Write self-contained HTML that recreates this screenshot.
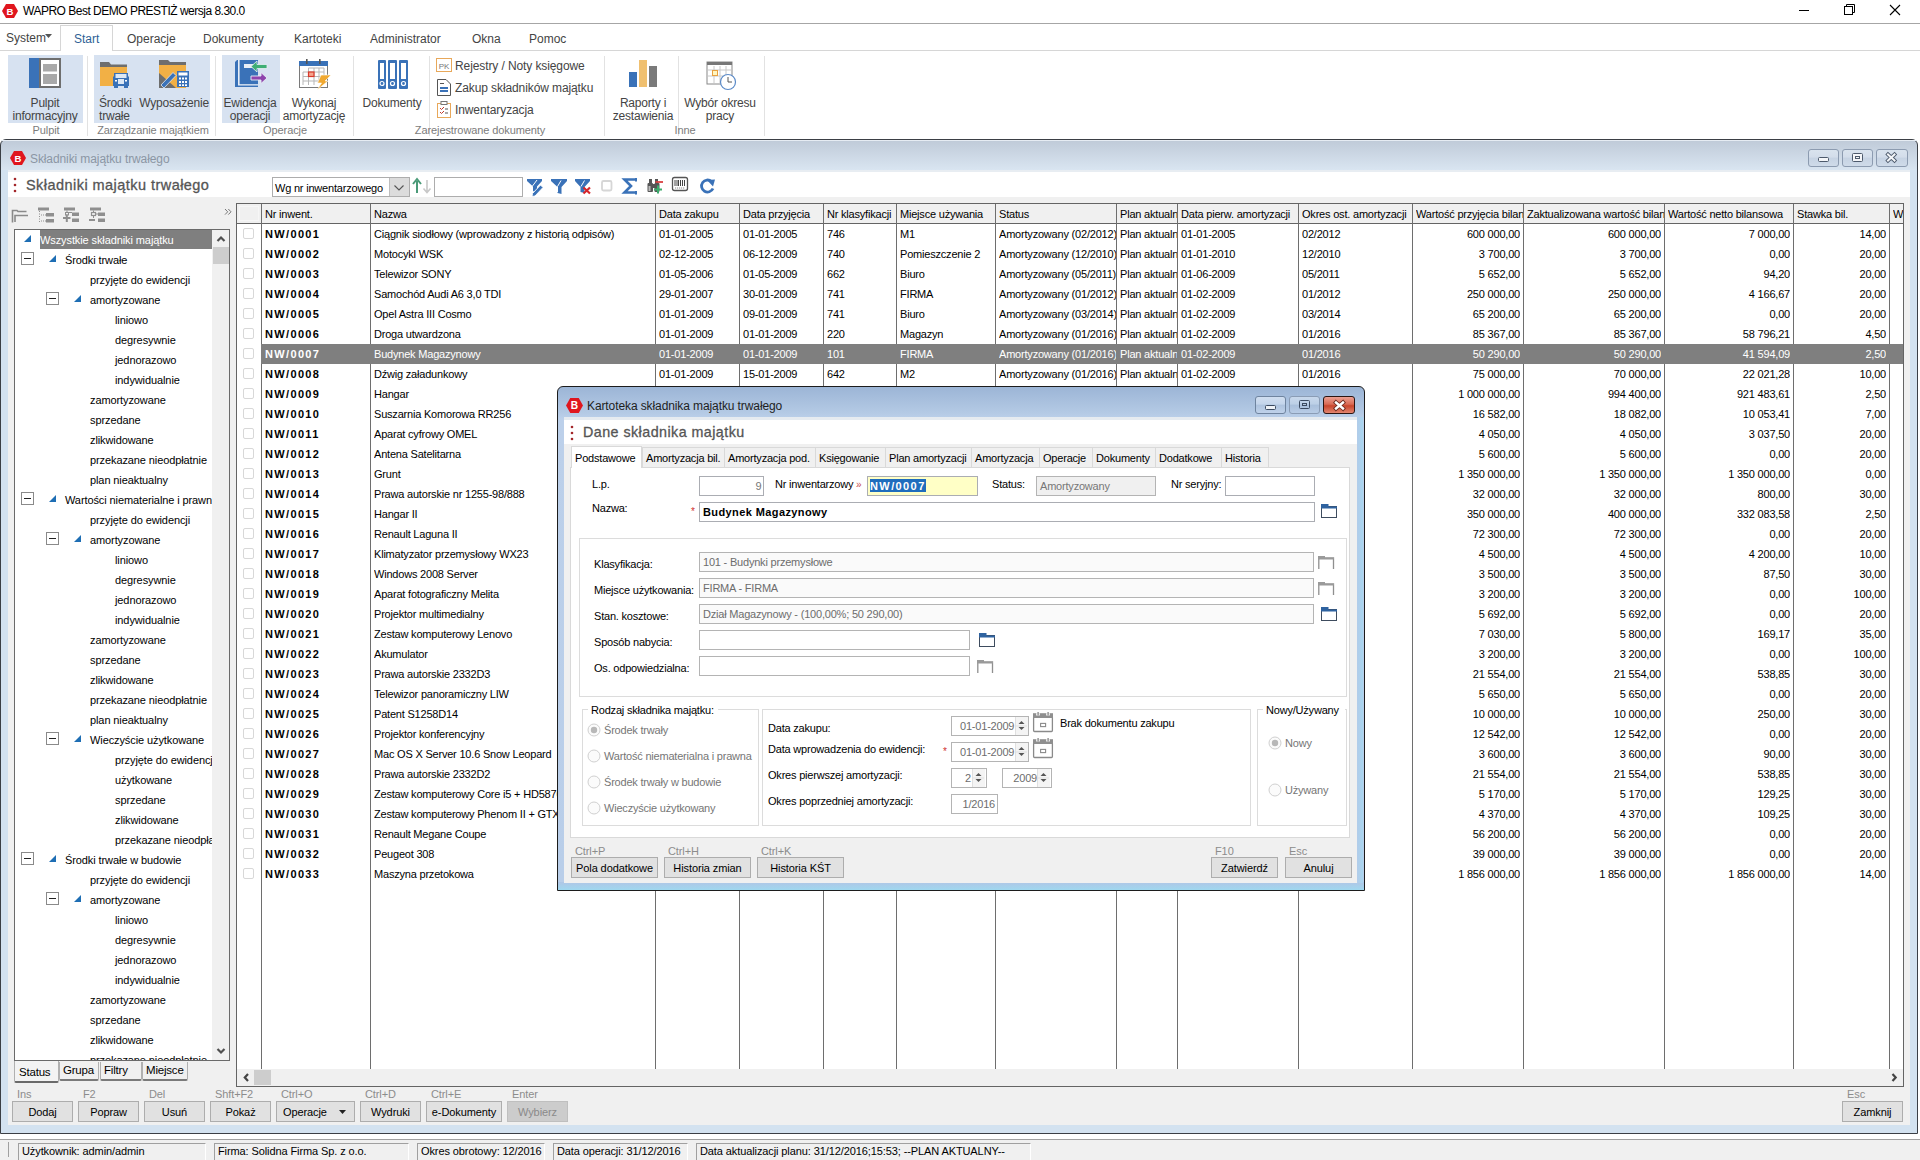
<!DOCTYPE html><html><head><meta charset="utf-8"><style>
html,body{margin:0;padding:0;}
body{width:1920px;height:1160px;overflow:hidden;position:relative;background:#ffffff;font-family:"Liberation Sans",sans-serif;}
div{position:absolute;box-sizing:border-box;}
.t{white-space:nowrap;}
</style></head><body>
<div style="left:0px;top:0px;width:1920px;height:23px;background:#fff"></div>
<svg style="position:absolute;left:2px;top:3px;" width="16" height="16" viewBox="0 0 16 16"><polygon points="4.0,0.96 12.0,0.96 16,8.0 12.0,15.04 4.0,15.04 0,8.0" fill="#e0161e"/><text x="8.0" y="11.52" font-family="Liberation Sans" font-weight="700" font-size="9.6" fill="#fff" text-anchor="middle">B</text></svg>
<div class="t" style="left:23px;top:3.3000000000000007px;font-size:12px;line-height:17px;color:#000;font-weight:400;letter-spacing:-0.5px">WAPRO Best DEMO PRESTIŻ wersja 8.30.0</div>
<svg style="position:absolute;left:1795px;top:0px;" width="125" height="23" viewBox="0 0 125 23"><line x1="4" y1="10.5" x2="14" y2="10.5" stroke="#000" stroke-width="1"/><rect x="49.5" y="6.5" width="8" height="8" fill="none" stroke="#000"/><path d="M51.5 6.5 V4.5 H59.5 V12.5 H57.5" fill="none" stroke="#000"/><path d="M95 5 L105 15 M105 5 L95 15" stroke="#000" stroke-width="1.1"/></svg>
<div style="left:0px;top:23px;width:1920px;height:1px;background:#a6a6a6"></div>
<div style="left:0px;top:24px;width:1920px;height:27px;background:#fff"></div>
<div style="left:0px;top:50px;width:1920px;height:1px;background:#d6d6d6"></div>
<div style="left:60px;top:25px;width:53px;height:26px;background:#fff;border:1px solid #d6d6d6;border-bottom:none"></div>
<div class="t" style="left:6px;top:29.5px;font-size:12px;line-height:17px;color:#444;font-weight:400;">System</div>
<svg style="position:absolute;left:45px;top:34px;" width="8" height="5" viewBox="0 0 8 5"><polygon points="0,0 7,0 3.5,4" fill="#555"/></svg>
<div class="t" style="left:74px;top:31.0px;font-size:12px;line-height:17px;color:#2f5f95;font-weight:400;">Start</div>
<div class="t" style="left:127px;top:31.0px;font-size:12px;line-height:17px;color:#444;font-weight:400;">Operacje</div>
<div class="t" style="left:203px;top:31.0px;font-size:12px;line-height:17px;color:#444;font-weight:400;">Dokumenty</div>
<div class="t" style="left:294px;top:31.0px;font-size:12px;line-height:17px;color:#444;font-weight:400;">Kartoteki</div>
<div class="t" style="left:370px;top:31.0px;font-size:12px;line-height:17px;color:#444;font-weight:400;">Administrator</div>
<div class="t" style="left:472px;top:31.0px;font-size:12px;line-height:17px;color:#444;font-weight:400;">Okna</div>
<div class="t" style="left:529px;top:31.0px;font-size:12px;line-height:17px;color:#444;font-weight:400;">Pomoc</div>
<div style="left:0px;top:51px;width:1920px;height:87px;background:#fff"></div>
<div style="left:8px;top:55px;width:75px;height:68px;background:#d7e2f1"></div>
<div style="left:94px;top:55px;width:116px;height:68px;background:#d7e2f1"></div>
<div style="left:222px;top:55px;width:58px;height:68px;background:#d7e2f1"></div>
<div style="left:87px;top:56px;width:1px;height:80px;background:#e2e2e2"></div>
<div style="left:215px;top:56px;width:1px;height:80px;background:#e2e2e2"></div>
<div style="left:353px;top:56px;width:1px;height:80px;background:#e2e2e2"></div>
<div style="left:429px;top:56px;width:1px;height:80px;background:#e2e2e2"></div>
<div style="left:604px;top:56px;width:1px;height:80px;background:#e2e2e2"></div>
<div style="left:678px;top:56px;width:1px;height:80px;background:#e2e2e2"></div>
<div style="left:764px;top:56px;width:1px;height:80px;background:#e2e2e2"></div>
<div class="t" style="left:-54.0px;width:200px;text-align:center;top:121.5px;font-size:11px;line-height:16px;color:#7c7c7c;font-weight:400;letter-spacing:-0.1px">Pulpit</div>
<div class="t" style="left:53.0px;width:200px;text-align:center;top:121.5px;font-size:11px;line-height:16px;color:#7c7c7c;font-weight:400;letter-spacing:-0.1px">Zarządzanie majątkiem</div>
<div class="t" style="left:185.0px;width:200px;text-align:center;top:121.5px;font-size:11px;line-height:16px;color:#7c7c7c;font-weight:400;letter-spacing:-0.1px">Operacje</div>
<div class="t" style="left:380.0px;width:200px;text-align:center;top:121.5px;font-size:11px;line-height:16px;color:#7c7c7c;font-weight:400;letter-spacing:-0.1px">Zarejestrowane dokumenty</div>
<div class="t" style="left:585.0px;width:200px;text-align:center;top:121.5px;font-size:11px;line-height:16px;color:#7c7c7c;font-weight:400;letter-spacing:-0.1px">Inne</div>
<div class="t" style="left:-55.0px;width:200px;text-align:center;top:94.5px;font-size:12px;line-height:17px;color:#444;font-weight:400;letter-spacing:-0.2px">Pulpit</div>
<div class="t" style="left:-55.0px;width:200px;text-align:center;top:107.5px;font-size:12px;line-height:17px;color:#444;font-weight:400;letter-spacing:-0.2px">informacyjny</div>
<div class="t" style="left:74.0px;width:200px;text-align:center;top:94.5px;font-size:12px;line-height:17px;color:#444;font-weight:400;letter-spacing:-0.2px">Wyposażenie</div>
<div class="t" style="left:150.0px;width:200px;text-align:center;top:94.5px;font-size:12px;line-height:17px;color:#444;font-weight:400;letter-spacing:-0.2px">Ewidencja</div>
<div class="t" style="left:150.0px;width:200px;text-align:center;top:107.5px;font-size:12px;line-height:17px;color:#444;font-weight:400;letter-spacing:-0.2px">operacji</div>
<div class="t" style="left:214.0px;width:200px;text-align:center;top:94.5px;font-size:12px;line-height:17px;color:#444;font-weight:400;letter-spacing:-0.2px">Wykonaj</div>
<div class="t" style="left:214.0px;width:200px;text-align:center;top:107.5px;font-size:12px;line-height:17px;color:#444;font-weight:400;letter-spacing:-0.2px">amortyzację</div>
<div class="t" style="left:292.0px;width:200px;text-align:center;top:94.5px;font-size:12px;line-height:17px;color:#444;font-weight:400;letter-spacing:-0.2px">Dokumenty</div>
<div class="t" style="left:543.0px;width:200px;text-align:center;top:94.5px;font-size:12px;line-height:17px;color:#444;font-weight:400;letter-spacing:-0.2px">Raporty i</div>
<div class="t" style="left:543.0px;width:200px;text-align:center;top:107.5px;font-size:12px;line-height:17px;color:#444;font-weight:400;letter-spacing:-0.2px">zestawienia</div>
<div class="t" style="left:620.0px;width:200px;text-align:center;top:94.5px;font-size:12px;line-height:17px;color:#444;font-weight:400;letter-spacing:-0.2px">Wybór okresu</div>
<div class="t" style="left:620.0px;width:200px;text-align:center;top:107.5px;font-size:12px;line-height:17px;color:#444;font-weight:400;letter-spacing:-0.2px">pracy</div>
<div class="t" style="left:99px;top:94.5px;font-size:12px;line-height:17px;color:#444;font-weight:400;letter-spacing:-0.2px">Środki</div>
<div class="t" style="left:99px;top:107.5px;font-size:12px;line-height:17px;color:#444;font-weight:400;letter-spacing:-0.2px">trwałe</div>
<div class="t" style="left:455px;top:58.0px;font-size:12px;line-height:17px;color:#444;font-weight:400;letter-spacing:-0.1px">Rejestry / Noty księgowe</div>
<div class="t" style="left:455px;top:80.0px;font-size:12px;line-height:17px;color:#444;font-weight:400;letter-spacing:-0.1px">Zakup składników majątku</div>
<div class="t" style="left:455px;top:102.0px;font-size:12px;line-height:17px;color:#444;font-weight:400;letter-spacing:-0.1px">Inwentaryzacja</div>
<svg style="position:absolute;left:29px;top:58px;" width="33" height="31" viewBox="0 0 33 31"><rect x="0" y="0" width="11" height="30" fill="#3a72b8"/><rect x="11" y="1" width="20" height="28" fill="#fff" stroke="#6e6e6e" stroke-width="2"/><rect x="14" y="6" width="14" height="7.5" fill="#a9a9a9"/><rect x="14" y="16" width="14" height="10" fill="#a9a9a9"/></svg>
<svg style="position:absolute;left:99px;top:60px;" width="32" height="30" viewBox="0 0 32 30"><path d="M1 2 H10 L12 4.5 H28 V7 H1 Z" fill="#6e6e6e"/><rect x="1" y="7" width="27" height="19" fill="#f2b045"/><path d="M15 13 H29 V16 L30 17 V26 H14 V17 L15 16 Z" fill="#3a72b8"/><rect x="16.5" y="14" width="11" height="4" fill="#dde8f5"/><rect x="19" y="19" width="6" height="5" fill="#dde8f5"/><rect x="15" y="25" width="4" height="3" fill="#3a72b8"/><rect x="25" y="25" width="4" height="3" fill="#3a72b8"/><rect x="16" y="20" width="2" height="1.5" fill="#fff"/><rect x="26" y="20" width="2" height="1.5" fill="#fff"/></svg>
<svg style="position:absolute;left:158px;top:59px;" width="33" height="31" viewBox="0 0 33 31"><path d="M1 1 H10 L12 3 H28 V6 H1 Z" fill="#6e6e6e"/><rect x="1" y="6" width="27" height="23" fill="#f2b045"/><path d="M1 14 L18 29 H1 Z" fill="#6e6e6e"/><path d="M3 26 L15 13.5 L18 16.5 L6 29 Z" fill="#3a72b8" stroke="#dfe8f3" stroke-width="0.8"/><rect x="19" y="12" width="12" height="16" fill="#3a72b8"/><rect x="20.5" y="13.5" width="9" height="3" fill="#fff"/><g fill="#fff"><rect x="21" y="18.5" width="2" height="2"/><rect x="24" y="18.5" width="2" height="2"/><rect x="27" y="18.5" width="2" height="2"/><rect x="21" y="22" width="2" height="2"/><rect x="24" y="22" width="2" height="2"/><rect x="27" y="22" width="2" height="2"/><rect x="21" y="25.3" width="2" height="1.7"/><rect x="24" y="25.3" width="2" height="1.7"/><rect x="27" y="25.3" width="2" height="1.7"/></g></svg>
<svg style="position:absolute;left:234px;top:59px;" width="34" height="30" viewBox="0 0 34 30"><path d="M3 1 H24 V28 H1 V3 Z" fill="#3a72b8"/><rect x="4" y="1" width="1.6" height="25" fill="#e8eef6"/><rect x="4" y="25.2" width="20" height="1.3" fill="#e8eef6"/><rect x="10" y="5" width="10" height="4" fill="#e8eef6"/><polygon points="17,7.5 23,2 23,5.5 33,5.5 33,9.5 23,9.5 23,13" fill="#3fae75" stroke="#e8eef6" stroke-width="0.8"/><polygon points="33,19 27,13.5 27,17 17,17 17,21 27,21 27,24.5" fill="#8e44ad" stroke="#e8eef6" stroke-width="0.9"/></svg>
<svg style="position:absolute;left:298px;top:58px;" width="34" height="32" viewBox="0 0 34 32"><rect x="1.5" y="3.5" width="28" height="26" fill="#fff" stroke="#7a7a7a" stroke-width="1"/><rect x="1" y="3" width="29" height="5" fill="#3a72b8"/><rect x="8" y="1" width="1.6" height="5" fill="#555"/><rect x="21" y="1" width="1.6" height="5" fill="#555"/><g stroke="#b7b7b7" stroke-width="1"><line x1="5" y1="14" x2="26" y2="14"/><line x1="5" y1="18.5" x2="26" y2="18.5"/><line x1="5" y1="23" x2="26" y2="23"/><line x1="5" y1="14" x2="5" y2="27"/><line x1="10.5" y1="10" x2="10.5" y2="27"/><line x1="16" y1="10" x2="16" y2="27"/><line x1="21" y1="10" x2="21" y2="25"/><line x1="10.5" y1="10" x2="26" y2="10"/><line x1="26" y1="10" x2="26" y2="20"/></g><rect x="10.5" y="14" width="5.5" height="4.5" fill="#f5a58e" stroke="#d8392b" stroke-width="1.2"/><path d="M23 17 H33 L27 23 H30 L19 32 L23.5 25 H19.5 Z" fill="#f0a830" stroke="#fff" stroke-width="0.6"/></svg>
<svg style="position:absolute;left:378px;top:60px;" width="30" height="29" viewBox="0 0 30 29"><g fill="#3a72b8"><rect x="0" y="0" width="8" height="29" rx="1"/><rect x="10" y="0" width="9" height="29" rx="1"/><rect x="21" y="0" width="9" height="29" rx="1"/></g><g fill="#fff"><rect x="2" y="3" width="4" height="16"/><rect x="12" y="3" width="5" height="16"/><rect x="23" y="3" width="5" height="16"/></g><g fill="none" stroke="#fff" stroke-width="1.2"><circle cx="4" cy="23.5" r="2"/><circle cx="14.5" cy="23.5" r="2"/><circle cx="25.5" cy="23.5" r="2"/></g></svg>
<svg style="position:absolute;left:436px;top:57px;" width="16" height="16" viewBox="0 0 16 16"><rect x="0.5" y="1.5" width="15" height="13" fill="#fff" stroke="#e8a85a" stroke-width="1"/><text x="8" y="12" font-family="Liberation Sans" font-size="8" fill="#777" text-anchor="middle">PK</text></svg>
<svg style="position:absolute;left:437px;top:79px;" width="14" height="17" viewBox="0 0 14 17"><path d="M0.5 0.5 H9 L13.5 5 V16.5 H0.5 Z" fill="#fff" stroke="#555"/><g fill="#3a72b8"><rect x="3" y="8" width="8" height="2"/><rect x="3" y="11" width="8" height="2"/></g><rect x="3" y="4" width="4" height="1" fill="#555"/></svg>
<svg style="position:absolute;left:437px;top:101px;" width="14" height="17" viewBox="0 0 14 17"><rect x="0.5" y="2.5" width="13" height="14" fill="#fff" stroke="#e8a85a"/><rect x="4" y="0.5" width="6" height="3" fill="#fff" stroke="#777"/><path d="M3 7 L4.5 8.5 L7 6 M3 11 L4.5 12.5 L7 10" stroke="#c0392b" fill="none"/><path d="M8 8 H11 M8 12 H11" stroke="#555"/></svg>
<svg style="position:absolute;left:629px;top:60px;" width="29" height="28" viewBox="0 0 29 28"><rect x="0" y="12" width="8" height="15" fill="#3a72b8"/><rect x="10" y="0" width="8" height="27" fill="#f0c070"/><rect x="20" y="6" width="8" height="21" fill="#7a7a7a"/></svg>
<svg style="position:absolute;left:706px;top:61px;" width="31" height="31" viewBox="0 0 31 31"><rect x="1" y="1" width="25" height="22" fill="#fff" stroke="#888"/><rect x="1" y="1" width="25" height="3" fill="#777"/><g stroke="#c8c8c8"><line x1="2" y1="9" x2="25" y2="9"/><line x1="2" y1="15" x2="25" y2="15"/><line x1="8" y1="5" x2="8" y2="22"/><line x1="14" y1="5" x2="14" y2="22"/><line x1="20" y1="5" x2="20" y2="22"/></g><rect x="6.5" y="9.5" width="5" height="5" fill="#fff6c0" stroke="#e8a040"/><circle cx="22" cy="21" r="7.5" fill="#fff" stroke="#5a8ac8" stroke-width="1.2"/><path d="M22 16 V21 H26" stroke="#555" fill="none"/></svg>
<div style="left:0px;top:139px;width:1918px;height:995px;background:linear-gradient(#bfcad8 0px,#d9e5f1 30px,#dae6f2 100%);border:1px solid #3b3f45;border-radius:6px 6px 0 0"></div>
<div style="left:1px;top:140px;width:1916px;height:1px;background:#e6ecf3"></div>
<div style="left:8px;top:170px;width:1902px;height:955px;background:#f0f0f0"></div>
<div style="left:8px;top:170px;width:1902px;height:2px;background:#e8edf2"></div>
<svg style="position:absolute;left:10px;top:150px;" width="16" height="16" viewBox="0 0 16 16"><polygon points="4.0,0.96 12.0,0.96 16,8.0 12.0,15.04 4.0,15.04 0,8.0" fill="#e0161e"/><text x="8.0" y="11.52" font-family="Liberation Sans" font-weight="700" font-size="9.6" fill="#fff" text-anchor="middle">B</text></svg>
<div class="t" style="left:30px;top:151.0px;font-size:12px;line-height:17px;color:#8b96a4;font-weight:400;letter-spacing:-0.1px">Składniki majątku trwałego</div>
<div style="left:1808px;top:149px;width:31px;height:18px;background:linear-gradient(#d9e3ee 0%,#d3ddea 45%,#c6d3e3 50%,#cfdbe9 100%);border:1px solid #8c9bb0;border-radius:3px"></div>
<div style="left:1842px;top:149px;width:31px;height:18px;background:linear-gradient(#d9e3ee 0%,#d3ddea 45%,#c6d3e3 50%,#cfdbe9 100%);border:1px solid #8c9bb0;border-radius:3px"></div>
<div style="left:1876px;top:149px;width:32px;height:18px;background:linear-gradient(#d9e3ee 0%,#d3ddea 45%,#c6d3e3 50%,#cfdbe9 100%);border:1px solid #8c9bb0;border-radius:3px"></div>
<svg style="position:absolute;left:1808px;top:149px;" width="100" height="18" viewBox="0 0 100 18"><rect x="10.5" y="8.5" width="10" height="4" rx="1" fill="#f4f6f9" stroke="#4d5a6c"/><rect x="44.5" y="4.5" width="10" height="8" rx="1" fill="#f4f6f9" stroke="#4d5a6c"/><rect x="47.5" y="7.5" width="4" height="2" fill="none" stroke="#4d5a6c"/><path d="M80 5.5 L86.5 11.5 M86.5 5.5 L80 11.5" stroke="#4d5a6c" stroke-width="3.8" stroke-linecap="square"/><path d="M80 5.5 L86.5 11.5 M86.5 5.5 L80 11.5" stroke="#f4f6f9" stroke-width="2" stroke-linecap="square"/></svg>
<div style="left:8px;top:172px;width:1902px;height:25px;background:#fff"></div>
<svg style="position:absolute;left:13px;top:177px;" width="4" height="16" viewBox="0 0 4 16"><circle cx="2" cy="2" r="1.3" fill="#a3262a"/><circle cx="2" cy="8" r="1.3" fill="#a3262a"/><circle cx="2" cy="14" r="1.3" fill="#a3262a"/></svg>
<div class="t" style="left:26px;top:176.25px;font-size:14.5px;line-height:19.5px;color:#555;font-weight:400;-webkit-text-stroke:0.3px #555;letter-spacing:0.45px">Składniki majątku trwałego</div>
<div style="left:272px;top:177px;width:138px;height:20px;background:#fff;border:1px solid #adadad"></div>
<div class="t" style="left:275px;top:179.5px;font-size:11px;line-height:16px;color:#000;font-weight:400;letter-spacing:-0.2px">Wg nr inwentarzowego</div>
<div style="left:389px;top:178px;width:20px;height:18px;background:#dcdcdc;border-left:1px solid #bdbdbd"></div>
<svg style="position:absolute;left:393px;top:184px;" width="12" height="8" viewBox="0 0 12 8"><path d="M1.5 1.5 L6 6 L10.5 1.5" fill="none" stroke="#555" stroke-width="1.1"/></svg>
<svg style="position:absolute;left:412px;top:177px;" width="20" height="18" viewBox="0 0 20 18"><path d="M5 16 V4 M1 7 L5 2 L9 7" fill="none" stroke="#4a9a78" stroke-width="2"/><path d="M15 3 V15 M11.5 11.5 L15 15.5 L18.5 11.5" fill="none" stroke="#c8c8c8" stroke-width="1.6"/></svg>
<div style="left:434px;top:177px;width:89px;height:20px;background:#fff;border:1px solid #adadad"></div>
<svg style="position:absolute;left:520px;top:172px;" width="200" height="28" viewBox="0 0 200 28"><path d="M7 7 H22 V9 L17 14.5 V21 L13 19 V14.5 L7 9 Z" fill="#3a72b8"/><path d="M17 8 L12.5 14" stroke="#fff" stroke-width="1"/><path d="M12.5 21.5 L20.5 13 L23 15.5 L15 24 L12 24.5 Z" fill="#3a72b8" stroke="#fff" stroke-width="0.9"/><path d="M31 7 H47 V9 L41.5 15 V22 L37.5 21 V15 L31 9 Z" fill="#3a72b8"/><path d="M41 8.5 L37.5 14.5 V20" stroke="#fff" stroke-width="1" fill="none"/><path d="M55 7 H70 V9 L64.5 15 V21 L60.5 20 V15 L55 9 Z" fill="#3a72b8"/><path d="M64.5 8.5 L61 14.5" stroke="#fff" stroke-width="1"/><path d="M63.5 15.5 L70 21.5 M70 15.5 L63.5 21.5" stroke="#d7262b" stroke-width="2.2"/><rect x="82" y="9" width="9.5" height="9.5" rx="1.5" fill="#fff" stroke="#d6d6d6" stroke-width="1.8"/><path d="M117 7.5 H104.5 L111 14 L104.5 20.5 H117" fill="none" stroke="#3a72b8" stroke-width="2.6" stroke-linejoin="miter"/><path d="M116 6 V9.5 M116 19 V22.5" stroke="#3a72b8" stroke-width="2"/><g fill="#555"><rect x="127.5" y="11" width="5.5" height="9" rx="1"/><rect x="134.5" y="11" width="5" height="9" rx="1"/><rect x="129" y="7" width="3" height="5"/><rect x="135" y="7" width="3" height="5"/><rect x="131" y="12" width="5" height="4"/></g><rect x="128.5" y="14" width="2" height="5" fill="#bbb"/><path d="M135.5 10 H143" stroke="#d94040" stroke-width="1.8"/><path d="M134 17.5 H142 M138 13.5 V21.5" stroke="#3bab6b" stroke-width="2"/><rect x="152.5" y="5.5" width="15" height="13" rx="2" fill="#fff" stroke="#555" stroke-width="1.3"/><g stroke="#444" stroke-width="1"><line x1="155" y1="8" x2="155" y2="14"/><line x1="157" y1="8" x2="157" y2="14"/><line x1="158.5" y1="8" x2="158.5" y2="14"/><line x1="160.5" y1="8" x2="160.5" y2="14"/><line x1="162.5" y1="8" x2="162.5" y2="14"/><line x1="164.5" y1="8" x2="164.5" y2="14"/></g><path d="M155 16 H165" stroke="#888" stroke-width="1" stroke-dasharray="1.2,0.8"/><path d="M191.5 9.5 A6 6 0 1 0 193 16.5" fill="none" stroke="#3a72b8" stroke-width="2.8"/><path d="M187 8 L195 7.5 L193 14.5 Z" fill="#3a72b8"/></svg>
<svg style="position:absolute;left:5px;top:198px;" width="110" height="30" viewBox="0 0 110 30"><path d="M7.5 24.5 V12.5 H12 L13 13.5 H21.5" fill="none" stroke="#8a8a8a" stroke-width="1.6"/><path d="M10 24 V17.5 H23" fill="none" stroke="#8a8a8a" stroke-width="1.6"/><g fill="#8f8f8f"><rect x="33" y="9.5" width="11" height="3"/><rect x="41" y="15" width="8" height="3.5"/><rect x="41" y="21" width="8" height="3.5"/></g><path d="M34.5 13 V24" stroke="#8f8f8f" stroke-width="1" stroke-dasharray="1,1.5"/><path d="M36 17 H41 M36 23 H41" stroke="#8f8f8f" stroke-dasharray="1,1"/><g fill="#8f8f8f"><rect x="59" y="9.5" width="11" height="3"/><rect x="67" y="14.5" width="7" height="3.5"/><rect x="67" y="20.5" width="7" height="3.5"/><rect x="58" y="19" width="7.5" height="2"/><rect x="60.8" y="16.5" width="2" height="7.5"/></g><path d="M62 12.5 V15 M62.5 14.5 H67" stroke="#8f8f8f"/><rect x="60.5" y="14.5" width="3" height="2.5" fill="none" stroke="#8f8f8f"/><g fill="#8f8f8f"><rect x="85" y="9.5" width="11" height="3"/><rect x="93" y="14.5" width="7" height="3.5"/><rect x="93" y="20.5" width="7" height="3.5"/><rect x="84" y="21" width="6" height="2"/></g><rect x="86.5" y="14.5" width="4" height="3" fill="none" stroke="#8f8f8f" stroke-width="1.2"/><path d="M88.5 12.5 V14.5 M88.5 17.5 V20 M90.5 16 H93" stroke="#8f8f8f"/></svg>
<svg style="position:absolute;left:224px;top:208px;" width="9" height="8" viewBox="0 0 9 8"><path d="M1 1 L3.7 3.8 L1 6.6 M4.3 1 L7 3.8 L4.3 6.6" fill="none" stroke="#777" stroke-width="1"/></svg>
<div style="left:14px;top:229px;width:216px;height:832px;background:#fff;border:1px solid #6a6a6a"></div>
<div style="left:15px;top:230px;width:197px;height:830px;overflow:hidden">
<div style="left:25px;top:-1px;width:172px;height:20px;background:#7f7f7f"></div>
<div class="t" style="left:25px;top:1.7999999999999998px;font-size:11px;line-height:16px;color:#fff;letter-spacing:-0.1px">Wszystkie składniki majątku</div>
<svg style="position:absolute;left:8px;top:4px" width="10" height="10"><polygon points="8,1 8,8 1,8" fill="#1e6eb4"/></svg>
<div class="t" style="left:50px;top:21.8px;font-size:11px;line-height:16px;color:#000;letter-spacing:-0.1px">Środki trwałe</div>
<svg style="position:absolute;left:33px;top:24px" width="10" height="10"><polygon points="8,1 8,8 1,8" fill="#1e6eb4"/></svg>
<div style="left:6px;top:22px;width:13px;height:13px;border:1px solid #8a8a8a;background:#fff"></div><div style="left:9px;top:28px;width:7px;height:1px;background:#222"></div>
<div class="t" style="left:75px;top:41.8px;font-size:11px;line-height:16px;color:#000;letter-spacing:-0.1px">przyjęte do ewidencji</div>
<div class="t" style="left:75px;top:61.8px;font-size:11px;line-height:16px;color:#000;letter-spacing:-0.1px">amortyzowane</div>
<svg style="position:absolute;left:58px;top:64px" width="10" height="10"><polygon points="8,1 8,8 1,8" fill="#1e6eb4"/></svg>
<div style="left:31px;top:62px;width:13px;height:13px;border:1px solid #8a8a8a;background:#fff"></div><div style="left:34px;top:68px;width:7px;height:1px;background:#222"></div>
<div class="t" style="left:100px;top:81.8px;font-size:11px;line-height:16px;color:#000;letter-spacing:-0.1px">liniowo</div>
<div class="t" style="left:100px;top:101.8px;font-size:11px;line-height:16px;color:#000;letter-spacing:-0.1px">degresywnie</div>
<div class="t" style="left:100px;top:121.8px;font-size:11px;line-height:16px;color:#000;letter-spacing:-0.1px">jednorazowo</div>
<div class="t" style="left:100px;top:141.8px;font-size:11px;line-height:16px;color:#000;letter-spacing:-0.1px">indywidualnie</div>
<div class="t" style="left:75px;top:161.8px;font-size:11px;line-height:16px;color:#000;letter-spacing:-0.1px">zamortyzowane</div>
<div class="t" style="left:75px;top:181.8px;font-size:11px;line-height:16px;color:#000;letter-spacing:-0.1px">sprzedane</div>
<div class="t" style="left:75px;top:201.8px;font-size:11px;line-height:16px;color:#000;letter-spacing:-0.1px">zlikwidowane</div>
<div class="t" style="left:75px;top:221.8px;font-size:11px;line-height:16px;color:#000;letter-spacing:-0.1px">przekazane nieodpłatnie</div>
<div class="t" style="left:75px;top:241.8px;font-size:11px;line-height:16px;color:#000;letter-spacing:-0.1px">plan nieaktualny</div>
<div class="t" style="left:50px;top:261.8px;font-size:11px;line-height:16px;color:#000;letter-spacing:-0.1px">Wartości niematerialne i prawne</div>
<svg style="position:absolute;left:33px;top:264px" width="10" height="10"><polygon points="8,1 8,8 1,8" fill="#1e6eb4"/></svg>
<div style="left:6px;top:262px;width:13px;height:13px;border:1px solid #8a8a8a;background:#fff"></div><div style="left:9px;top:268px;width:7px;height:1px;background:#222"></div>
<div class="t" style="left:75px;top:281.8px;font-size:11px;line-height:16px;color:#000;letter-spacing:-0.1px">przyjęte do ewidencji</div>
<div class="t" style="left:75px;top:301.8px;font-size:11px;line-height:16px;color:#000;letter-spacing:-0.1px">amortyzowane</div>
<svg style="position:absolute;left:58px;top:304px" width="10" height="10"><polygon points="8,1 8,8 1,8" fill="#1e6eb4"/></svg>
<div style="left:31px;top:302px;width:13px;height:13px;border:1px solid #8a8a8a;background:#fff"></div><div style="left:34px;top:308px;width:7px;height:1px;background:#222"></div>
<div class="t" style="left:100px;top:321.8px;font-size:11px;line-height:16px;color:#000;letter-spacing:-0.1px">liniowo</div>
<div class="t" style="left:100px;top:341.8px;font-size:11px;line-height:16px;color:#000;letter-spacing:-0.1px">degresywnie</div>
<div class="t" style="left:100px;top:361.8px;font-size:11px;line-height:16px;color:#000;letter-spacing:-0.1px">jednorazowo</div>
<div class="t" style="left:100px;top:381.8px;font-size:11px;line-height:16px;color:#000;letter-spacing:-0.1px">indywidualnie</div>
<div class="t" style="left:75px;top:401.8px;font-size:11px;line-height:16px;color:#000;letter-spacing:-0.1px">zamortyzowane</div>
<div class="t" style="left:75px;top:421.8px;font-size:11px;line-height:16px;color:#000;letter-spacing:-0.1px">sprzedane</div>
<div class="t" style="left:75px;top:441.8px;font-size:11px;line-height:16px;color:#000;letter-spacing:-0.1px">zlikwidowane</div>
<div class="t" style="left:75px;top:461.8px;font-size:11px;line-height:16px;color:#000;letter-spacing:-0.1px">przekazane nieodpłatnie</div>
<div class="t" style="left:75px;top:481.8px;font-size:11px;line-height:16px;color:#000;letter-spacing:-0.1px">plan nieaktualny</div>
<div class="t" style="left:75px;top:501.8px;font-size:11px;line-height:16px;color:#000;letter-spacing:-0.1px">Wieczyście użytkowane</div>
<svg style="position:absolute;left:58px;top:504px" width="10" height="10"><polygon points="8,1 8,8 1,8" fill="#1e6eb4"/></svg>
<div style="left:31px;top:502px;width:13px;height:13px;border:1px solid #8a8a8a;background:#fff"></div><div style="left:34px;top:508px;width:7px;height:1px;background:#222"></div>
<div class="t" style="left:100px;top:521.8px;font-size:11px;line-height:16px;color:#000;letter-spacing:-0.1px">przyjęte do ewidencji</div>
<div class="t" style="left:100px;top:541.8px;font-size:11px;line-height:16px;color:#000;letter-spacing:-0.1px">użytkowane</div>
<div class="t" style="left:100px;top:561.8px;font-size:11px;line-height:16px;color:#000;letter-spacing:-0.1px">sprzedane</div>
<div class="t" style="left:100px;top:581.8px;font-size:11px;line-height:16px;color:#000;letter-spacing:-0.1px">zlikwidowane</div>
<div class="t" style="left:100px;top:601.8px;font-size:11px;line-height:16px;color:#000;letter-spacing:-0.1px">przekazane nieodpłatnie</div>
<div class="t" style="left:50px;top:621.8px;font-size:11px;line-height:16px;color:#000;letter-spacing:-0.1px">Środki trwałe w budowie</div>
<svg style="position:absolute;left:33px;top:624px" width="10" height="10"><polygon points="8,1 8,8 1,8" fill="#1e6eb4"/></svg>
<div style="left:6px;top:622px;width:13px;height:13px;border:1px solid #8a8a8a;background:#fff"></div><div style="left:9px;top:628px;width:7px;height:1px;background:#222"></div>
<div class="t" style="left:75px;top:641.8px;font-size:11px;line-height:16px;color:#000;letter-spacing:-0.1px">przyjęte do ewidencji</div>
<div class="t" style="left:75px;top:661.8px;font-size:11px;line-height:16px;color:#000;letter-spacing:-0.1px">amortyzowane</div>
<svg style="position:absolute;left:58px;top:664px" width="10" height="10"><polygon points="8,1 8,8 1,8" fill="#1e6eb4"/></svg>
<div style="left:31px;top:662px;width:13px;height:13px;border:1px solid #8a8a8a;background:#fff"></div><div style="left:34px;top:668px;width:7px;height:1px;background:#222"></div>
<div class="t" style="left:100px;top:681.8px;font-size:11px;line-height:16px;color:#000;letter-spacing:-0.1px">liniowo</div>
<div class="t" style="left:100px;top:701.8px;font-size:11px;line-height:16px;color:#000;letter-spacing:-0.1px">degresywnie</div>
<div class="t" style="left:100px;top:721.8px;font-size:11px;line-height:16px;color:#000;letter-spacing:-0.1px">jednorazowo</div>
<div class="t" style="left:100px;top:741.8px;font-size:11px;line-height:16px;color:#000;letter-spacing:-0.1px">indywidualnie</div>
<div class="t" style="left:75px;top:761.8px;font-size:11px;line-height:16px;color:#000;letter-spacing:-0.1px">zamortyzowane</div>
<div class="t" style="left:75px;top:781.8px;font-size:11px;line-height:16px;color:#000;letter-spacing:-0.1px">sprzedane</div>
<div class="t" style="left:75px;top:801.8px;font-size:11px;line-height:16px;color:#000;letter-spacing:-0.1px">zlikwidowane</div>
<div class="t" style="left:75px;top:821.8px;font-size:11px;line-height:16px;color:#000;letter-spacing:-0.1px">przekazane nieodpłatnie</div>
</div>
<div style="left:212px;top:230px;width:17px;height:830px;background:#f0f0f0"></div>
<svg style="position:absolute;left:213px;top:232px;" width="16" height="14" viewBox="0 0 16 14"><path d="M4.5 9 L8 5.5 L11.5 9" fill="none" stroke="#505050" stroke-width="2.2"/></svg>
<div style="left:213px;top:247px;width:16px;height:17px;background:#cdcdcd"></div>
<svg style="position:absolute;left:213px;top:1044px;" width="16" height="14" viewBox="0 0 16 14"><path d="M4.5 5 L8 8.5 L11.5 5" fill="none" stroke="#505050" stroke-width="2.2"/></svg>
<div style="left:14px;top:1061px;width:45px;height:22px;background:#f3f3f3;border:1px solid #b0b0b0;border-top:none;border-bottom:2px solid #6a6a6a;border-radius:0 0 2px 2px"></div>
<div class="t" style="left:19px;top:1063.75px;font-size:11.5px;line-height:16.5px;color:#000;font-weight:400;letter-spacing:-0.2px">Status</div>
<div style="left:59px;top:1062px;width:40px;height:19px;background:#f0f0f0;border:1px solid #b0b0b0;border-top:none;border-bottom:2px solid #7a7a7a;border-radius:0 0 2px 2px"></div>
<div class="t" style="left:63px;top:1062.25px;font-size:11.5px;line-height:16.5px;color:#000;font-weight:400;letter-spacing:-0.2px">Grupa</div>
<div style="left:100px;top:1062px;width:42px;height:19px;background:#f0f0f0;border:1px solid #b0b0b0;border-top:none;border-bottom:2px solid #7a7a7a;border-radius:0 0 2px 2px"></div>
<div class="t" style="left:104px;top:1062.25px;font-size:11.5px;line-height:16.5px;color:#000;font-weight:400;letter-spacing:-0.2px">Filtry</div>
<div style="left:142px;top:1062px;width:46px;height:19px;background:#f0f0f0;border:1px solid #b0b0b0;border-top:none;border-bottom:2px solid #7a7a7a;border-radius:0 0 2px 2px"></div>
<div class="t" style="left:146px;top:1062.25px;font-size:11.5px;line-height:16.5px;color:#000;font-weight:400;letter-spacing:-0.2px">Miejsce</div>
<div style="left:236px;top:203px;width:1668px;height:884px;background:#fff;border:1px solid #646464"></div>
<div style="left:237px;top:204px;width:1666px;height:19px;background:#f0f0f0"></div>
<div style="left:237px;top:223px;width:1666px;height:1px;background:#646464"></div>
<div style="left:261px;top:204px;width:1px;height:865px;background:#6e6e6e"></div>
<div style="left:370px;top:204px;width:1px;height:865px;background:#6e6e6e"></div>
<div style="left:655px;top:204px;width:1px;height:865px;background:#6e6e6e"></div>
<div style="left:739px;top:204px;width:1px;height:865px;background:#6e6e6e"></div>
<div style="left:823px;top:204px;width:1px;height:865px;background:#6e6e6e"></div>
<div style="left:896px;top:204px;width:1px;height:865px;background:#6e6e6e"></div>
<div style="left:995px;top:204px;width:1px;height:865px;background:#6e6e6e"></div>
<div style="left:1116px;top:204px;width:1px;height:865px;background:#6e6e6e"></div>
<div style="left:1177px;top:204px;width:1px;height:865px;background:#6e6e6e"></div>
<div style="left:1298px;top:204px;width:1px;height:865px;background:#6e6e6e"></div>
<div style="left:1412px;top:204px;width:1px;height:865px;background:#6e6e6e"></div>
<div style="left:1523px;top:204px;width:1px;height:865px;background:#6e6e6e"></div>
<div style="left:1664px;top:204px;width:1px;height:865px;background:#6e6e6e"></div>
<div style="left:1793px;top:204px;width:1px;height:865px;background:#6e6e6e"></div>
<div style="left:1889px;top:204px;width:1px;height:865px;background:#6e6e6e"></div>
<div class="t" style="left:265px;top:205.5px;width:105px;overflow:hidden;font-size:11px;line-height:16px;color:#000;letter-spacing:-0.2px">Nr inwent.</div>
<div class="t" style="left:374px;top:205.5px;width:281px;overflow:hidden;font-size:11px;line-height:16px;color:#000;letter-spacing:-0.2px">Nazwa</div>
<div class="t" style="left:659px;top:205.5px;width:80px;overflow:hidden;font-size:11px;line-height:16px;color:#000;letter-spacing:-0.2px">Data zakupu</div>
<div class="t" style="left:743px;top:205.5px;width:80px;overflow:hidden;font-size:11px;line-height:16px;color:#000;letter-spacing:-0.2px">Data przyjęcia</div>
<div class="t" style="left:827px;top:205.5px;width:69px;overflow:hidden;font-size:11px;line-height:16px;color:#000;letter-spacing:-0.2px">Nr klasyfikacji</div>
<div class="t" style="left:900px;top:205.5px;width:95px;overflow:hidden;font-size:11px;line-height:16px;color:#000;letter-spacing:-0.2px">Miejsce używania</div>
<div class="t" style="left:999px;top:205.5px;width:117px;overflow:hidden;font-size:11px;line-height:16px;color:#000;letter-spacing:-0.2px">Status</div>
<div class="t" style="left:1120px;top:205.5px;width:57px;overflow:hidden;font-size:11px;line-height:16px;color:#000;letter-spacing:-0.2px">Plan aktualny</div>
<div class="t" style="left:1181px;top:205.5px;width:117px;overflow:hidden;font-size:11px;line-height:16px;color:#000;letter-spacing:-0.2px">Data pierw. amortyzacji</div>
<div class="t" style="left:1302px;top:205.5px;width:110px;overflow:hidden;font-size:11px;line-height:16px;color:#000;letter-spacing:-0.2px">Okres ost. amortyzacji</div>
<div class="t" style="left:1416px;top:205.5px;width:107px;overflow:hidden;font-size:11px;line-height:16px;color:#000;letter-spacing:-0.2px">Wartość przyjęcia bilansowa</div>
<div class="t" style="left:1527px;top:205.5px;width:137px;overflow:hidden;font-size:11px;line-height:16px;color:#000;letter-spacing:-0.2px">Zaktualizowana wartość bilansowa</div>
<div class="t" style="left:1668px;top:205.5px;width:125px;overflow:hidden;font-size:11px;line-height:16px;color:#000;letter-spacing:-0.2px">Wartość netto bilansowa</div>
<div class="t" style="left:1797px;top:205.5px;width:92px;overflow:hidden;font-size:11px;line-height:16px;color:#000;letter-spacing:-0.2px">Stawka bil.</div>
<div class="t" style="left:1893px;top:205.5px;width:10px;overflow:hidden;font-size:11px;line-height:16px;color:#000;letter-spacing:-0.2px">Wartość</div>
<div style="left:239px;top:206px;width:20px;height:15px;border:1px solid #f6f6f6"></div>
<div class="t" style="left:265px;top:226px;width:105px;overflow:hidden;font-size:11px;line-height:16px;color:#000;font-weight:700;letter-spacing:1.35px;">NW/0001</div>
<div class="t" style="left:374px;top:226px;width:281px;overflow:hidden;font-size:11px;line-height:16px;color:#000;letter-spacing:-0.2px;">Ciągnik siodłowy (wprowadzony z historią odpisów)</div>
<div class="t" style="left:659px;top:226px;width:80px;overflow:hidden;font-size:11px;line-height:16px;color:#000;letter-spacing:-0.2px;">01-01-2005</div>
<div class="t" style="left:743px;top:226px;width:80px;overflow:hidden;font-size:11px;line-height:16px;color:#000;letter-spacing:-0.2px;">01-01-2005</div>
<div class="t" style="left:827px;top:226px;width:69px;overflow:hidden;font-size:11px;line-height:16px;color:#000;letter-spacing:-0.2px;">746</div>
<div class="t" style="left:900px;top:226px;width:95px;overflow:hidden;font-size:11px;line-height:16px;color:#000;letter-spacing:-0.2px;">M1</div>
<div class="t" style="left:999px;top:226px;width:117px;overflow:hidden;font-size:11px;line-height:16px;color:#000;letter-spacing:-0.2px;">Amortyzowany (02/2012)</div>
<div class="t" style="left:1120px;top:226px;width:57px;overflow:hidden;font-size:11px;line-height:16px;color:#000;letter-spacing:-0.2px;">Plan aktualny</div>
<div class="t" style="left:1181px;top:226px;width:117px;overflow:hidden;font-size:11px;line-height:16px;color:#000;letter-spacing:-0.2px;">01-01-2005</div>
<div class="t" style="left:1302px;top:226px;width:110px;overflow:hidden;font-size:11px;line-height:16px;color:#000;letter-spacing:-0.2px;">02/2012</div>
<div class="t" style="left:1413px;top:226px;width:107px;overflow:hidden;text-align:right;font-size:11px;line-height:16px;color:#000;letter-spacing:-0.2px;">600 000,00</div>
<div class="t" style="left:1524px;top:226px;width:137px;overflow:hidden;text-align:right;font-size:11px;line-height:16px;color:#000;letter-spacing:-0.2px;">600 000,00</div>
<div class="t" style="left:1665px;top:226px;width:125px;overflow:hidden;text-align:right;font-size:11px;line-height:16px;color:#000;letter-spacing:-0.2px;">7 000,00</div>
<div class="t" style="left:1794px;top:226px;width:92px;overflow:hidden;text-align:right;font-size:11px;line-height:16px;color:#000;letter-spacing:-0.2px;">14,00</div>
<div class="t" style="left:265px;top:246px;width:105px;overflow:hidden;font-size:11px;line-height:16px;color:#000;font-weight:700;letter-spacing:1.35px;">NW/0002</div>
<div class="t" style="left:374px;top:246px;width:281px;overflow:hidden;font-size:11px;line-height:16px;color:#000;letter-spacing:-0.2px;">Motocykl WSK</div>
<div class="t" style="left:659px;top:246px;width:80px;overflow:hidden;font-size:11px;line-height:16px;color:#000;letter-spacing:-0.2px;">02-12-2005</div>
<div class="t" style="left:743px;top:246px;width:80px;overflow:hidden;font-size:11px;line-height:16px;color:#000;letter-spacing:-0.2px;">06-12-2009</div>
<div class="t" style="left:827px;top:246px;width:69px;overflow:hidden;font-size:11px;line-height:16px;color:#000;letter-spacing:-0.2px;">740</div>
<div class="t" style="left:900px;top:246px;width:95px;overflow:hidden;font-size:11px;line-height:16px;color:#000;letter-spacing:-0.2px;">Pomieszczenie 2</div>
<div class="t" style="left:999px;top:246px;width:117px;overflow:hidden;font-size:11px;line-height:16px;color:#000;letter-spacing:-0.2px;">Amortyzowany (12/2010)</div>
<div class="t" style="left:1120px;top:246px;width:57px;overflow:hidden;font-size:11px;line-height:16px;color:#000;letter-spacing:-0.2px;">Plan aktualny</div>
<div class="t" style="left:1181px;top:246px;width:117px;overflow:hidden;font-size:11px;line-height:16px;color:#000;letter-spacing:-0.2px;">01-01-2010</div>
<div class="t" style="left:1302px;top:246px;width:110px;overflow:hidden;font-size:11px;line-height:16px;color:#000;letter-spacing:-0.2px;">12/2010</div>
<div class="t" style="left:1413px;top:246px;width:107px;overflow:hidden;text-align:right;font-size:11px;line-height:16px;color:#000;letter-spacing:-0.2px;">3 700,00</div>
<div class="t" style="left:1524px;top:246px;width:137px;overflow:hidden;text-align:right;font-size:11px;line-height:16px;color:#000;letter-spacing:-0.2px;">3 700,00</div>
<div class="t" style="left:1665px;top:246px;width:125px;overflow:hidden;text-align:right;font-size:11px;line-height:16px;color:#000;letter-spacing:-0.2px;">0,00</div>
<div class="t" style="left:1794px;top:246px;width:92px;overflow:hidden;text-align:right;font-size:11px;line-height:16px;color:#000;letter-spacing:-0.2px;">20,00</div>
<div class="t" style="left:265px;top:266px;width:105px;overflow:hidden;font-size:11px;line-height:16px;color:#000;font-weight:700;letter-spacing:1.35px;">NW/0003</div>
<div class="t" style="left:374px;top:266px;width:281px;overflow:hidden;font-size:11px;line-height:16px;color:#000;letter-spacing:-0.2px;">Telewizor SONY</div>
<div class="t" style="left:659px;top:266px;width:80px;overflow:hidden;font-size:11px;line-height:16px;color:#000;letter-spacing:-0.2px;">01-05-2006</div>
<div class="t" style="left:743px;top:266px;width:80px;overflow:hidden;font-size:11px;line-height:16px;color:#000;letter-spacing:-0.2px;">01-05-2009</div>
<div class="t" style="left:827px;top:266px;width:69px;overflow:hidden;font-size:11px;line-height:16px;color:#000;letter-spacing:-0.2px;">662</div>
<div class="t" style="left:900px;top:266px;width:95px;overflow:hidden;font-size:11px;line-height:16px;color:#000;letter-spacing:-0.2px;">Biuro</div>
<div class="t" style="left:999px;top:266px;width:117px;overflow:hidden;font-size:11px;line-height:16px;color:#000;letter-spacing:-0.2px;">Amortyzowany (05/2011)</div>
<div class="t" style="left:1120px;top:266px;width:57px;overflow:hidden;font-size:11px;line-height:16px;color:#000;letter-spacing:-0.2px;">Plan aktualny</div>
<div class="t" style="left:1181px;top:266px;width:117px;overflow:hidden;font-size:11px;line-height:16px;color:#000;letter-spacing:-0.2px;">01-06-2009</div>
<div class="t" style="left:1302px;top:266px;width:110px;overflow:hidden;font-size:11px;line-height:16px;color:#000;letter-spacing:-0.2px;">05/2011</div>
<div class="t" style="left:1413px;top:266px;width:107px;overflow:hidden;text-align:right;font-size:11px;line-height:16px;color:#000;letter-spacing:-0.2px;">5 652,00</div>
<div class="t" style="left:1524px;top:266px;width:137px;overflow:hidden;text-align:right;font-size:11px;line-height:16px;color:#000;letter-spacing:-0.2px;">5 652,00</div>
<div class="t" style="left:1665px;top:266px;width:125px;overflow:hidden;text-align:right;font-size:11px;line-height:16px;color:#000;letter-spacing:-0.2px;">94,20</div>
<div class="t" style="left:1794px;top:266px;width:92px;overflow:hidden;text-align:right;font-size:11px;line-height:16px;color:#000;letter-spacing:-0.2px;">20,00</div>
<div class="t" style="left:265px;top:286px;width:105px;overflow:hidden;font-size:11px;line-height:16px;color:#000;font-weight:700;letter-spacing:1.35px;">NW/0004</div>
<div class="t" style="left:374px;top:286px;width:281px;overflow:hidden;font-size:11px;line-height:16px;color:#000;letter-spacing:-0.2px;">Samochód Audi A6 3,0 TDI</div>
<div class="t" style="left:659px;top:286px;width:80px;overflow:hidden;font-size:11px;line-height:16px;color:#000;letter-spacing:-0.2px;">29-01-2007</div>
<div class="t" style="left:743px;top:286px;width:80px;overflow:hidden;font-size:11px;line-height:16px;color:#000;letter-spacing:-0.2px;">30-01-2009</div>
<div class="t" style="left:827px;top:286px;width:69px;overflow:hidden;font-size:11px;line-height:16px;color:#000;letter-spacing:-0.2px;">741</div>
<div class="t" style="left:900px;top:286px;width:95px;overflow:hidden;font-size:11px;line-height:16px;color:#000;letter-spacing:-0.2px;">FIRMA</div>
<div class="t" style="left:999px;top:286px;width:117px;overflow:hidden;font-size:11px;line-height:16px;color:#000;letter-spacing:-0.2px;">Amortyzowany (01/2012)</div>
<div class="t" style="left:1120px;top:286px;width:57px;overflow:hidden;font-size:11px;line-height:16px;color:#000;letter-spacing:-0.2px;">Plan aktualny</div>
<div class="t" style="left:1181px;top:286px;width:117px;overflow:hidden;font-size:11px;line-height:16px;color:#000;letter-spacing:-0.2px;">01-02-2009</div>
<div class="t" style="left:1302px;top:286px;width:110px;overflow:hidden;font-size:11px;line-height:16px;color:#000;letter-spacing:-0.2px;">01/2012</div>
<div class="t" style="left:1413px;top:286px;width:107px;overflow:hidden;text-align:right;font-size:11px;line-height:16px;color:#000;letter-spacing:-0.2px;">250 000,00</div>
<div class="t" style="left:1524px;top:286px;width:137px;overflow:hidden;text-align:right;font-size:11px;line-height:16px;color:#000;letter-spacing:-0.2px;">250 000,00</div>
<div class="t" style="left:1665px;top:286px;width:125px;overflow:hidden;text-align:right;font-size:11px;line-height:16px;color:#000;letter-spacing:-0.2px;">4 166,67</div>
<div class="t" style="left:1794px;top:286px;width:92px;overflow:hidden;text-align:right;font-size:11px;line-height:16px;color:#000;letter-spacing:-0.2px;">20,00</div>
<div class="t" style="left:265px;top:306px;width:105px;overflow:hidden;font-size:11px;line-height:16px;color:#000;font-weight:700;letter-spacing:1.35px;">NW/0005</div>
<div class="t" style="left:374px;top:306px;width:281px;overflow:hidden;font-size:11px;line-height:16px;color:#000;letter-spacing:-0.2px;">Opel Astra III Cosmo</div>
<div class="t" style="left:659px;top:306px;width:80px;overflow:hidden;font-size:11px;line-height:16px;color:#000;letter-spacing:-0.2px;">01-01-2009</div>
<div class="t" style="left:743px;top:306px;width:80px;overflow:hidden;font-size:11px;line-height:16px;color:#000;letter-spacing:-0.2px;">09-01-2009</div>
<div class="t" style="left:827px;top:306px;width:69px;overflow:hidden;font-size:11px;line-height:16px;color:#000;letter-spacing:-0.2px;">741</div>
<div class="t" style="left:900px;top:306px;width:95px;overflow:hidden;font-size:11px;line-height:16px;color:#000;letter-spacing:-0.2px;">Biuro</div>
<div class="t" style="left:999px;top:306px;width:117px;overflow:hidden;font-size:11px;line-height:16px;color:#000;letter-spacing:-0.2px;">Amortyzowany (03/2014)</div>
<div class="t" style="left:1120px;top:306px;width:57px;overflow:hidden;font-size:11px;line-height:16px;color:#000;letter-spacing:-0.2px;">Plan aktualny</div>
<div class="t" style="left:1181px;top:306px;width:117px;overflow:hidden;font-size:11px;line-height:16px;color:#000;letter-spacing:-0.2px;">01-02-2009</div>
<div class="t" style="left:1302px;top:306px;width:110px;overflow:hidden;font-size:11px;line-height:16px;color:#000;letter-spacing:-0.2px;">03/2014</div>
<div class="t" style="left:1413px;top:306px;width:107px;overflow:hidden;text-align:right;font-size:11px;line-height:16px;color:#000;letter-spacing:-0.2px;">65 200,00</div>
<div class="t" style="left:1524px;top:306px;width:137px;overflow:hidden;text-align:right;font-size:11px;line-height:16px;color:#000;letter-spacing:-0.2px;">65 200,00</div>
<div class="t" style="left:1665px;top:306px;width:125px;overflow:hidden;text-align:right;font-size:11px;line-height:16px;color:#000;letter-spacing:-0.2px;">0,00</div>
<div class="t" style="left:1794px;top:306px;width:92px;overflow:hidden;text-align:right;font-size:11px;line-height:16px;color:#000;letter-spacing:-0.2px;">20,00</div>
<div class="t" style="left:265px;top:326px;width:105px;overflow:hidden;font-size:11px;line-height:16px;color:#000;font-weight:700;letter-spacing:1.35px;">NW/0006</div>
<div class="t" style="left:374px;top:326px;width:281px;overflow:hidden;font-size:11px;line-height:16px;color:#000;letter-spacing:-0.2px;">Droga utwardzona</div>
<div class="t" style="left:659px;top:326px;width:80px;overflow:hidden;font-size:11px;line-height:16px;color:#000;letter-spacing:-0.2px;">01-01-2009</div>
<div class="t" style="left:743px;top:326px;width:80px;overflow:hidden;font-size:11px;line-height:16px;color:#000;letter-spacing:-0.2px;">01-01-2009</div>
<div class="t" style="left:827px;top:326px;width:69px;overflow:hidden;font-size:11px;line-height:16px;color:#000;letter-spacing:-0.2px;">220</div>
<div class="t" style="left:900px;top:326px;width:95px;overflow:hidden;font-size:11px;line-height:16px;color:#000;letter-spacing:-0.2px;">Magazyn</div>
<div class="t" style="left:999px;top:326px;width:117px;overflow:hidden;font-size:11px;line-height:16px;color:#000;letter-spacing:-0.2px;">Amortyzowany (01/2016)</div>
<div class="t" style="left:1120px;top:326px;width:57px;overflow:hidden;font-size:11px;line-height:16px;color:#000;letter-spacing:-0.2px;">Plan aktualny</div>
<div class="t" style="left:1181px;top:326px;width:117px;overflow:hidden;font-size:11px;line-height:16px;color:#000;letter-spacing:-0.2px;">01-02-2009</div>
<div class="t" style="left:1302px;top:326px;width:110px;overflow:hidden;font-size:11px;line-height:16px;color:#000;letter-spacing:-0.2px;">01/2016</div>
<div class="t" style="left:1413px;top:326px;width:107px;overflow:hidden;text-align:right;font-size:11px;line-height:16px;color:#000;letter-spacing:-0.2px;">85 367,00</div>
<div class="t" style="left:1524px;top:326px;width:137px;overflow:hidden;text-align:right;font-size:11px;line-height:16px;color:#000;letter-spacing:-0.2px;">85 367,00</div>
<div class="t" style="left:1665px;top:326px;width:125px;overflow:hidden;text-align:right;font-size:11px;line-height:16px;color:#000;letter-spacing:-0.2px;">58 796,21</div>
<div class="t" style="left:1794px;top:326px;width:92px;overflow:hidden;text-align:right;font-size:11px;line-height:16px;color:#000;letter-spacing:-0.2px;">4,50</div>
<div style="left:261px;top:344px;width:1642px;height:20px;background:#7f7f7f"></div>
<div class="t" style="left:265px;top:346px;width:105px;overflow:hidden;font-size:11px;line-height:16px;color:#fff;font-weight:700;letter-spacing:1.35px;">NW/0007</div>
<div class="t" style="left:374px;top:346px;width:281px;overflow:hidden;font-size:11px;line-height:16px;color:#fff;letter-spacing:-0.2px;">Budynek Magazynowy</div>
<div class="t" style="left:659px;top:346px;width:80px;overflow:hidden;font-size:11px;line-height:16px;color:#fff;letter-spacing:-0.2px;">01-01-2009</div>
<div class="t" style="left:743px;top:346px;width:80px;overflow:hidden;font-size:11px;line-height:16px;color:#fff;letter-spacing:-0.2px;">01-01-2009</div>
<div class="t" style="left:827px;top:346px;width:69px;overflow:hidden;font-size:11px;line-height:16px;color:#fff;letter-spacing:-0.2px;">101</div>
<div class="t" style="left:900px;top:346px;width:95px;overflow:hidden;font-size:11px;line-height:16px;color:#fff;letter-spacing:-0.2px;">FIRMA</div>
<div class="t" style="left:999px;top:346px;width:117px;overflow:hidden;font-size:11px;line-height:16px;color:#fff;letter-spacing:-0.2px;">Amortyzowany (01/2016)</div>
<div class="t" style="left:1120px;top:346px;width:57px;overflow:hidden;font-size:11px;line-height:16px;color:#fff;letter-spacing:-0.2px;">Plan aktualny</div>
<div class="t" style="left:1181px;top:346px;width:117px;overflow:hidden;font-size:11px;line-height:16px;color:#fff;letter-spacing:-0.2px;">01-02-2009</div>
<div class="t" style="left:1302px;top:346px;width:110px;overflow:hidden;font-size:11px;line-height:16px;color:#fff;letter-spacing:-0.2px;">01/2016</div>
<div class="t" style="left:1413px;top:346px;width:107px;overflow:hidden;text-align:right;font-size:11px;line-height:16px;color:#fff;letter-spacing:-0.2px;">50 290,00</div>
<div class="t" style="left:1524px;top:346px;width:137px;overflow:hidden;text-align:right;font-size:11px;line-height:16px;color:#fff;letter-spacing:-0.2px;">50 290,00</div>
<div class="t" style="left:1665px;top:346px;width:125px;overflow:hidden;text-align:right;font-size:11px;line-height:16px;color:#fff;letter-spacing:-0.2px;">41 594,09</div>
<div class="t" style="left:1794px;top:346px;width:92px;overflow:hidden;text-align:right;font-size:11px;line-height:16px;color:#fff;letter-spacing:-0.2px;">2,50</div>
<div class="t" style="left:265px;top:366px;width:105px;overflow:hidden;font-size:11px;line-height:16px;color:#000;font-weight:700;letter-spacing:1.35px;">NW/0008</div>
<div class="t" style="left:374px;top:366px;width:281px;overflow:hidden;font-size:11px;line-height:16px;color:#000;letter-spacing:-0.2px;">Dźwig załadunkowy</div>
<div class="t" style="left:659px;top:366px;width:80px;overflow:hidden;font-size:11px;line-height:16px;color:#000;letter-spacing:-0.2px;">01-01-2009</div>
<div class="t" style="left:743px;top:366px;width:80px;overflow:hidden;font-size:11px;line-height:16px;color:#000;letter-spacing:-0.2px;">15-01-2009</div>
<div class="t" style="left:827px;top:366px;width:69px;overflow:hidden;font-size:11px;line-height:16px;color:#000;letter-spacing:-0.2px;">642</div>
<div class="t" style="left:900px;top:366px;width:95px;overflow:hidden;font-size:11px;line-height:16px;color:#000;letter-spacing:-0.2px;">M2</div>
<div class="t" style="left:999px;top:366px;width:117px;overflow:hidden;font-size:11px;line-height:16px;color:#000;letter-spacing:-0.2px;">Amortyzowany (01/2016)</div>
<div class="t" style="left:1120px;top:366px;width:57px;overflow:hidden;font-size:11px;line-height:16px;color:#000;letter-spacing:-0.2px;">Plan aktualny</div>
<div class="t" style="left:1181px;top:366px;width:117px;overflow:hidden;font-size:11px;line-height:16px;color:#000;letter-spacing:-0.2px;">01-02-2009</div>
<div class="t" style="left:1302px;top:366px;width:110px;overflow:hidden;font-size:11px;line-height:16px;color:#000;letter-spacing:-0.2px;">01/2016</div>
<div class="t" style="left:1413px;top:366px;width:107px;overflow:hidden;text-align:right;font-size:11px;line-height:16px;color:#000;letter-spacing:-0.2px;">75 000,00</div>
<div class="t" style="left:1524px;top:366px;width:137px;overflow:hidden;text-align:right;font-size:11px;line-height:16px;color:#000;letter-spacing:-0.2px;">70 000,00</div>
<div class="t" style="left:1665px;top:366px;width:125px;overflow:hidden;text-align:right;font-size:11px;line-height:16px;color:#000;letter-spacing:-0.2px;">22 021,28</div>
<div class="t" style="left:1794px;top:366px;width:92px;overflow:hidden;text-align:right;font-size:11px;line-height:16px;color:#000;letter-spacing:-0.2px;">10,00</div>
<div class="t" style="left:265px;top:386px;width:105px;overflow:hidden;font-size:11px;line-height:16px;color:#000;font-weight:700;letter-spacing:1.35px;">NW/0009</div>
<div class="t" style="left:374px;top:386px;width:281px;overflow:hidden;font-size:11px;line-height:16px;color:#000;letter-spacing:-0.2px;">Hangar</div>
<div class="t" style="left:1413px;top:386px;width:107px;overflow:hidden;text-align:right;font-size:11px;line-height:16px;color:#000;letter-spacing:-0.2px;">1 000 000,00</div>
<div class="t" style="left:1524px;top:386px;width:137px;overflow:hidden;text-align:right;font-size:11px;line-height:16px;color:#000;letter-spacing:-0.2px;">994 400,00</div>
<div class="t" style="left:1665px;top:386px;width:125px;overflow:hidden;text-align:right;font-size:11px;line-height:16px;color:#000;letter-spacing:-0.2px;">921 483,61</div>
<div class="t" style="left:1794px;top:386px;width:92px;overflow:hidden;text-align:right;font-size:11px;line-height:16px;color:#000;letter-spacing:-0.2px;">2,50</div>
<div class="t" style="left:265px;top:406px;width:105px;overflow:hidden;font-size:11px;line-height:16px;color:#000;font-weight:700;letter-spacing:1.35px;">NW/0010</div>
<div class="t" style="left:374px;top:406px;width:281px;overflow:hidden;font-size:11px;line-height:16px;color:#000;letter-spacing:-0.2px;">Suszarnia Komorowa RR256</div>
<div class="t" style="left:1413px;top:406px;width:107px;overflow:hidden;text-align:right;font-size:11px;line-height:16px;color:#000;letter-spacing:-0.2px;">16 582,00</div>
<div class="t" style="left:1524px;top:406px;width:137px;overflow:hidden;text-align:right;font-size:11px;line-height:16px;color:#000;letter-spacing:-0.2px;">18 082,00</div>
<div class="t" style="left:1665px;top:406px;width:125px;overflow:hidden;text-align:right;font-size:11px;line-height:16px;color:#000;letter-spacing:-0.2px;">10 053,41</div>
<div class="t" style="left:1794px;top:406px;width:92px;overflow:hidden;text-align:right;font-size:11px;line-height:16px;color:#000;letter-spacing:-0.2px;">7,00</div>
<div class="t" style="left:265px;top:426px;width:105px;overflow:hidden;font-size:11px;line-height:16px;color:#000;font-weight:700;letter-spacing:1.35px;">NW/0011</div>
<div class="t" style="left:374px;top:426px;width:281px;overflow:hidden;font-size:11px;line-height:16px;color:#000;letter-spacing:-0.2px;">Aparat cyfrowy OMEL</div>
<div class="t" style="left:1413px;top:426px;width:107px;overflow:hidden;text-align:right;font-size:11px;line-height:16px;color:#000;letter-spacing:-0.2px;">4 050,00</div>
<div class="t" style="left:1524px;top:426px;width:137px;overflow:hidden;text-align:right;font-size:11px;line-height:16px;color:#000;letter-spacing:-0.2px;">4 050,00</div>
<div class="t" style="left:1665px;top:426px;width:125px;overflow:hidden;text-align:right;font-size:11px;line-height:16px;color:#000;letter-spacing:-0.2px;">3 037,50</div>
<div class="t" style="left:1794px;top:426px;width:92px;overflow:hidden;text-align:right;font-size:11px;line-height:16px;color:#000;letter-spacing:-0.2px;">20,00</div>
<div class="t" style="left:265px;top:446px;width:105px;overflow:hidden;font-size:11px;line-height:16px;color:#000;font-weight:700;letter-spacing:1.35px;">NW/0012</div>
<div class="t" style="left:374px;top:446px;width:281px;overflow:hidden;font-size:11px;line-height:16px;color:#000;letter-spacing:-0.2px;">Antena Satelitarna</div>
<div class="t" style="left:1413px;top:446px;width:107px;overflow:hidden;text-align:right;font-size:11px;line-height:16px;color:#000;letter-spacing:-0.2px;">5 600,00</div>
<div class="t" style="left:1524px;top:446px;width:137px;overflow:hidden;text-align:right;font-size:11px;line-height:16px;color:#000;letter-spacing:-0.2px;">5 600,00</div>
<div class="t" style="left:1665px;top:446px;width:125px;overflow:hidden;text-align:right;font-size:11px;line-height:16px;color:#000;letter-spacing:-0.2px;">0,00</div>
<div class="t" style="left:1794px;top:446px;width:92px;overflow:hidden;text-align:right;font-size:11px;line-height:16px;color:#000;letter-spacing:-0.2px;">20,00</div>
<div class="t" style="left:265px;top:466px;width:105px;overflow:hidden;font-size:11px;line-height:16px;color:#000;font-weight:700;letter-spacing:1.35px;">NW/0013</div>
<div class="t" style="left:374px;top:466px;width:281px;overflow:hidden;font-size:11px;line-height:16px;color:#000;letter-spacing:-0.2px;">Grunt</div>
<div class="t" style="left:1413px;top:466px;width:107px;overflow:hidden;text-align:right;font-size:11px;line-height:16px;color:#000;letter-spacing:-0.2px;">1 350 000,00</div>
<div class="t" style="left:1524px;top:466px;width:137px;overflow:hidden;text-align:right;font-size:11px;line-height:16px;color:#000;letter-spacing:-0.2px;">1 350 000,00</div>
<div class="t" style="left:1665px;top:466px;width:125px;overflow:hidden;text-align:right;font-size:11px;line-height:16px;color:#000;letter-spacing:-0.2px;">1 350 000,00</div>
<div class="t" style="left:1794px;top:466px;width:92px;overflow:hidden;text-align:right;font-size:11px;line-height:16px;color:#000;letter-spacing:-0.2px;">0,00</div>
<div class="t" style="left:265px;top:486px;width:105px;overflow:hidden;font-size:11px;line-height:16px;color:#000;font-weight:700;letter-spacing:1.35px;">NW/0014</div>
<div class="t" style="left:374px;top:486px;width:281px;overflow:hidden;font-size:11px;line-height:16px;color:#000;letter-spacing:-0.2px;">Prawa autorskie nr 1255-98/888</div>
<div class="t" style="left:1413px;top:486px;width:107px;overflow:hidden;text-align:right;font-size:11px;line-height:16px;color:#000;letter-spacing:-0.2px;">32 000,00</div>
<div class="t" style="left:1524px;top:486px;width:137px;overflow:hidden;text-align:right;font-size:11px;line-height:16px;color:#000;letter-spacing:-0.2px;">32 000,00</div>
<div class="t" style="left:1665px;top:486px;width:125px;overflow:hidden;text-align:right;font-size:11px;line-height:16px;color:#000;letter-spacing:-0.2px;">800,00</div>
<div class="t" style="left:1794px;top:486px;width:92px;overflow:hidden;text-align:right;font-size:11px;line-height:16px;color:#000;letter-spacing:-0.2px;">30,00</div>
<div class="t" style="left:265px;top:506px;width:105px;overflow:hidden;font-size:11px;line-height:16px;color:#000;font-weight:700;letter-spacing:1.35px;">NW/0015</div>
<div class="t" style="left:374px;top:506px;width:281px;overflow:hidden;font-size:11px;line-height:16px;color:#000;letter-spacing:-0.2px;">Hangar II</div>
<div class="t" style="left:1413px;top:506px;width:107px;overflow:hidden;text-align:right;font-size:11px;line-height:16px;color:#000;letter-spacing:-0.2px;">350 000,00</div>
<div class="t" style="left:1524px;top:506px;width:137px;overflow:hidden;text-align:right;font-size:11px;line-height:16px;color:#000;letter-spacing:-0.2px;">400 000,00</div>
<div class="t" style="left:1665px;top:506px;width:125px;overflow:hidden;text-align:right;font-size:11px;line-height:16px;color:#000;letter-spacing:-0.2px;">332 083,58</div>
<div class="t" style="left:1794px;top:506px;width:92px;overflow:hidden;text-align:right;font-size:11px;line-height:16px;color:#000;letter-spacing:-0.2px;">2,50</div>
<div class="t" style="left:265px;top:526px;width:105px;overflow:hidden;font-size:11px;line-height:16px;color:#000;font-weight:700;letter-spacing:1.35px;">NW/0016</div>
<div class="t" style="left:374px;top:526px;width:281px;overflow:hidden;font-size:11px;line-height:16px;color:#000;letter-spacing:-0.2px;">Renault Laguna II</div>
<div class="t" style="left:1413px;top:526px;width:107px;overflow:hidden;text-align:right;font-size:11px;line-height:16px;color:#000;letter-spacing:-0.2px;">72 300,00</div>
<div class="t" style="left:1524px;top:526px;width:137px;overflow:hidden;text-align:right;font-size:11px;line-height:16px;color:#000;letter-spacing:-0.2px;">72 300,00</div>
<div class="t" style="left:1665px;top:526px;width:125px;overflow:hidden;text-align:right;font-size:11px;line-height:16px;color:#000;letter-spacing:-0.2px;">0,00</div>
<div class="t" style="left:1794px;top:526px;width:92px;overflow:hidden;text-align:right;font-size:11px;line-height:16px;color:#000;letter-spacing:-0.2px;">20,00</div>
<div class="t" style="left:265px;top:546px;width:105px;overflow:hidden;font-size:11px;line-height:16px;color:#000;font-weight:700;letter-spacing:1.35px;">NW/0017</div>
<div class="t" style="left:374px;top:546px;width:281px;overflow:hidden;font-size:11px;line-height:16px;color:#000;letter-spacing:-0.2px;">Klimatyzator przemysłowy WX23</div>
<div class="t" style="left:1413px;top:546px;width:107px;overflow:hidden;text-align:right;font-size:11px;line-height:16px;color:#000;letter-spacing:-0.2px;">4 500,00</div>
<div class="t" style="left:1524px;top:546px;width:137px;overflow:hidden;text-align:right;font-size:11px;line-height:16px;color:#000;letter-spacing:-0.2px;">4 500,00</div>
<div class="t" style="left:1665px;top:546px;width:125px;overflow:hidden;text-align:right;font-size:11px;line-height:16px;color:#000;letter-spacing:-0.2px;">4 200,00</div>
<div class="t" style="left:1794px;top:546px;width:92px;overflow:hidden;text-align:right;font-size:11px;line-height:16px;color:#000;letter-spacing:-0.2px;">10,00</div>
<div class="t" style="left:265px;top:566px;width:105px;overflow:hidden;font-size:11px;line-height:16px;color:#000;font-weight:700;letter-spacing:1.35px;">NW/0018</div>
<div class="t" style="left:374px;top:566px;width:281px;overflow:hidden;font-size:11px;line-height:16px;color:#000;letter-spacing:-0.2px;">Windows 2008 Server</div>
<div class="t" style="left:1413px;top:566px;width:107px;overflow:hidden;text-align:right;font-size:11px;line-height:16px;color:#000;letter-spacing:-0.2px;">3 500,00</div>
<div class="t" style="left:1524px;top:566px;width:137px;overflow:hidden;text-align:right;font-size:11px;line-height:16px;color:#000;letter-spacing:-0.2px;">3 500,00</div>
<div class="t" style="left:1665px;top:566px;width:125px;overflow:hidden;text-align:right;font-size:11px;line-height:16px;color:#000;letter-spacing:-0.2px;">87,50</div>
<div class="t" style="left:1794px;top:566px;width:92px;overflow:hidden;text-align:right;font-size:11px;line-height:16px;color:#000;letter-spacing:-0.2px;">30,00</div>
<div class="t" style="left:265px;top:586px;width:105px;overflow:hidden;font-size:11px;line-height:16px;color:#000;font-weight:700;letter-spacing:1.35px;">NW/0019</div>
<div class="t" style="left:374px;top:586px;width:281px;overflow:hidden;font-size:11px;line-height:16px;color:#000;letter-spacing:-0.2px;">Aparat fotograficzny Melita</div>
<div class="t" style="left:1413px;top:586px;width:107px;overflow:hidden;text-align:right;font-size:11px;line-height:16px;color:#000;letter-spacing:-0.2px;">3 200,00</div>
<div class="t" style="left:1524px;top:586px;width:137px;overflow:hidden;text-align:right;font-size:11px;line-height:16px;color:#000;letter-spacing:-0.2px;">3 200,00</div>
<div class="t" style="left:1665px;top:586px;width:125px;overflow:hidden;text-align:right;font-size:11px;line-height:16px;color:#000;letter-spacing:-0.2px;">0,00</div>
<div class="t" style="left:1794px;top:586px;width:92px;overflow:hidden;text-align:right;font-size:11px;line-height:16px;color:#000;letter-spacing:-0.2px;">100,00</div>
<div class="t" style="left:265px;top:606px;width:105px;overflow:hidden;font-size:11px;line-height:16px;color:#000;font-weight:700;letter-spacing:1.35px;">NW/0020</div>
<div class="t" style="left:374px;top:606px;width:281px;overflow:hidden;font-size:11px;line-height:16px;color:#000;letter-spacing:-0.2px;">Projektor multimedialny</div>
<div class="t" style="left:1413px;top:606px;width:107px;overflow:hidden;text-align:right;font-size:11px;line-height:16px;color:#000;letter-spacing:-0.2px;">5 692,00</div>
<div class="t" style="left:1524px;top:606px;width:137px;overflow:hidden;text-align:right;font-size:11px;line-height:16px;color:#000;letter-spacing:-0.2px;">5 692,00</div>
<div class="t" style="left:1665px;top:606px;width:125px;overflow:hidden;text-align:right;font-size:11px;line-height:16px;color:#000;letter-spacing:-0.2px;">0,00</div>
<div class="t" style="left:1794px;top:606px;width:92px;overflow:hidden;text-align:right;font-size:11px;line-height:16px;color:#000;letter-spacing:-0.2px;">20,00</div>
<div class="t" style="left:265px;top:626px;width:105px;overflow:hidden;font-size:11px;line-height:16px;color:#000;font-weight:700;letter-spacing:1.35px;">NW/0021</div>
<div class="t" style="left:374px;top:626px;width:281px;overflow:hidden;font-size:11px;line-height:16px;color:#000;letter-spacing:-0.2px;">Zestaw komputerowy Lenovo</div>
<div class="t" style="left:1413px;top:626px;width:107px;overflow:hidden;text-align:right;font-size:11px;line-height:16px;color:#000;letter-spacing:-0.2px;">7 030,00</div>
<div class="t" style="left:1524px;top:626px;width:137px;overflow:hidden;text-align:right;font-size:11px;line-height:16px;color:#000;letter-spacing:-0.2px;">5 800,00</div>
<div class="t" style="left:1665px;top:626px;width:125px;overflow:hidden;text-align:right;font-size:11px;line-height:16px;color:#000;letter-spacing:-0.2px;">169,17</div>
<div class="t" style="left:1794px;top:626px;width:92px;overflow:hidden;text-align:right;font-size:11px;line-height:16px;color:#000;letter-spacing:-0.2px;">35,00</div>
<div class="t" style="left:265px;top:646px;width:105px;overflow:hidden;font-size:11px;line-height:16px;color:#000;font-weight:700;letter-spacing:1.35px;">NW/0022</div>
<div class="t" style="left:374px;top:646px;width:281px;overflow:hidden;font-size:11px;line-height:16px;color:#000;letter-spacing:-0.2px;">Akumulator</div>
<div class="t" style="left:1413px;top:646px;width:107px;overflow:hidden;text-align:right;font-size:11px;line-height:16px;color:#000;letter-spacing:-0.2px;">3 200,00</div>
<div class="t" style="left:1524px;top:646px;width:137px;overflow:hidden;text-align:right;font-size:11px;line-height:16px;color:#000;letter-spacing:-0.2px;">3 200,00</div>
<div class="t" style="left:1665px;top:646px;width:125px;overflow:hidden;text-align:right;font-size:11px;line-height:16px;color:#000;letter-spacing:-0.2px;">0,00</div>
<div class="t" style="left:1794px;top:646px;width:92px;overflow:hidden;text-align:right;font-size:11px;line-height:16px;color:#000;letter-spacing:-0.2px;">100,00</div>
<div class="t" style="left:265px;top:666px;width:105px;overflow:hidden;font-size:11px;line-height:16px;color:#000;font-weight:700;letter-spacing:1.35px;">NW/0023</div>
<div class="t" style="left:374px;top:666px;width:281px;overflow:hidden;font-size:11px;line-height:16px;color:#000;letter-spacing:-0.2px;">Prawa autorskie 2332D3</div>
<div class="t" style="left:1413px;top:666px;width:107px;overflow:hidden;text-align:right;font-size:11px;line-height:16px;color:#000;letter-spacing:-0.2px;">21 554,00</div>
<div class="t" style="left:1524px;top:666px;width:137px;overflow:hidden;text-align:right;font-size:11px;line-height:16px;color:#000;letter-spacing:-0.2px;">21 554,00</div>
<div class="t" style="left:1665px;top:666px;width:125px;overflow:hidden;text-align:right;font-size:11px;line-height:16px;color:#000;letter-spacing:-0.2px;">538,85</div>
<div class="t" style="left:1794px;top:666px;width:92px;overflow:hidden;text-align:right;font-size:11px;line-height:16px;color:#000;letter-spacing:-0.2px;">30,00</div>
<div class="t" style="left:265px;top:686px;width:105px;overflow:hidden;font-size:11px;line-height:16px;color:#000;font-weight:700;letter-spacing:1.35px;">NW/0024</div>
<div class="t" style="left:374px;top:686px;width:281px;overflow:hidden;font-size:11px;line-height:16px;color:#000;letter-spacing:-0.2px;">Telewizor panoramiczny LIW</div>
<div class="t" style="left:1413px;top:686px;width:107px;overflow:hidden;text-align:right;font-size:11px;line-height:16px;color:#000;letter-spacing:-0.2px;">5 650,00</div>
<div class="t" style="left:1524px;top:686px;width:137px;overflow:hidden;text-align:right;font-size:11px;line-height:16px;color:#000;letter-spacing:-0.2px;">5 650,00</div>
<div class="t" style="left:1665px;top:686px;width:125px;overflow:hidden;text-align:right;font-size:11px;line-height:16px;color:#000;letter-spacing:-0.2px;">0,00</div>
<div class="t" style="left:1794px;top:686px;width:92px;overflow:hidden;text-align:right;font-size:11px;line-height:16px;color:#000;letter-spacing:-0.2px;">20,00</div>
<div class="t" style="left:265px;top:706px;width:105px;overflow:hidden;font-size:11px;line-height:16px;color:#000;font-weight:700;letter-spacing:1.35px;">NW/0025</div>
<div class="t" style="left:374px;top:706px;width:281px;overflow:hidden;font-size:11px;line-height:16px;color:#000;letter-spacing:-0.2px;">Patent S1258D14</div>
<div class="t" style="left:1413px;top:706px;width:107px;overflow:hidden;text-align:right;font-size:11px;line-height:16px;color:#000;letter-spacing:-0.2px;">10 000,00</div>
<div class="t" style="left:1524px;top:706px;width:137px;overflow:hidden;text-align:right;font-size:11px;line-height:16px;color:#000;letter-spacing:-0.2px;">10 000,00</div>
<div class="t" style="left:1665px;top:706px;width:125px;overflow:hidden;text-align:right;font-size:11px;line-height:16px;color:#000;letter-spacing:-0.2px;">250,00</div>
<div class="t" style="left:1794px;top:706px;width:92px;overflow:hidden;text-align:right;font-size:11px;line-height:16px;color:#000;letter-spacing:-0.2px;">30,00</div>
<div class="t" style="left:265px;top:726px;width:105px;overflow:hidden;font-size:11px;line-height:16px;color:#000;font-weight:700;letter-spacing:1.35px;">NW/0026</div>
<div class="t" style="left:374px;top:726px;width:281px;overflow:hidden;font-size:11px;line-height:16px;color:#000;letter-spacing:-0.2px;">Projektor konferencyjny</div>
<div class="t" style="left:1413px;top:726px;width:107px;overflow:hidden;text-align:right;font-size:11px;line-height:16px;color:#000;letter-spacing:-0.2px;">12 542,00</div>
<div class="t" style="left:1524px;top:726px;width:137px;overflow:hidden;text-align:right;font-size:11px;line-height:16px;color:#000;letter-spacing:-0.2px;">12 542,00</div>
<div class="t" style="left:1665px;top:726px;width:125px;overflow:hidden;text-align:right;font-size:11px;line-height:16px;color:#000;letter-spacing:-0.2px;">0,00</div>
<div class="t" style="left:1794px;top:726px;width:92px;overflow:hidden;text-align:right;font-size:11px;line-height:16px;color:#000;letter-spacing:-0.2px;">20,00</div>
<div class="t" style="left:265px;top:746px;width:105px;overflow:hidden;font-size:11px;line-height:16px;color:#000;font-weight:700;letter-spacing:1.35px;">NW/0027</div>
<div class="t" style="left:374px;top:746px;width:281px;overflow:hidden;font-size:11px;line-height:16px;color:#000;letter-spacing:-0.2px;">Mac OS X Server 10.6 Snow Leopard</div>
<div class="t" style="left:1413px;top:746px;width:107px;overflow:hidden;text-align:right;font-size:11px;line-height:16px;color:#000;letter-spacing:-0.2px;">3 600,00</div>
<div class="t" style="left:1524px;top:746px;width:137px;overflow:hidden;text-align:right;font-size:11px;line-height:16px;color:#000;letter-spacing:-0.2px;">3 600,00</div>
<div class="t" style="left:1665px;top:746px;width:125px;overflow:hidden;text-align:right;font-size:11px;line-height:16px;color:#000;letter-spacing:-0.2px;">90,00</div>
<div class="t" style="left:1794px;top:746px;width:92px;overflow:hidden;text-align:right;font-size:11px;line-height:16px;color:#000;letter-spacing:-0.2px;">30,00</div>
<div class="t" style="left:265px;top:766px;width:105px;overflow:hidden;font-size:11px;line-height:16px;color:#000;font-weight:700;letter-spacing:1.35px;">NW/0028</div>
<div class="t" style="left:374px;top:766px;width:281px;overflow:hidden;font-size:11px;line-height:16px;color:#000;letter-spacing:-0.2px;">Prawa autorskie 2332D2</div>
<div class="t" style="left:1413px;top:766px;width:107px;overflow:hidden;text-align:right;font-size:11px;line-height:16px;color:#000;letter-spacing:-0.2px;">21 554,00</div>
<div class="t" style="left:1524px;top:766px;width:137px;overflow:hidden;text-align:right;font-size:11px;line-height:16px;color:#000;letter-spacing:-0.2px;">21 554,00</div>
<div class="t" style="left:1665px;top:766px;width:125px;overflow:hidden;text-align:right;font-size:11px;line-height:16px;color:#000;letter-spacing:-0.2px;">538,85</div>
<div class="t" style="left:1794px;top:766px;width:92px;overflow:hidden;text-align:right;font-size:11px;line-height:16px;color:#000;letter-spacing:-0.2px;">30,00</div>
<div class="t" style="left:265px;top:786px;width:105px;overflow:hidden;font-size:11px;line-height:16px;color:#000;font-weight:700;letter-spacing:1.35px;">NW/0029</div>
<div class="t" style="left:374px;top:786px;width:281px;overflow:hidden;font-size:11px;line-height:16px;color:#000;letter-spacing:-0.2px;">Zestaw komputerowy Core i5 + HD5870</div>
<div class="t" style="left:1413px;top:786px;width:107px;overflow:hidden;text-align:right;font-size:11px;line-height:16px;color:#000;letter-spacing:-0.2px;">5 170,00</div>
<div class="t" style="left:1524px;top:786px;width:137px;overflow:hidden;text-align:right;font-size:11px;line-height:16px;color:#000;letter-spacing:-0.2px;">5 170,00</div>
<div class="t" style="left:1665px;top:786px;width:125px;overflow:hidden;text-align:right;font-size:11px;line-height:16px;color:#000;letter-spacing:-0.2px;">129,25</div>
<div class="t" style="left:1794px;top:786px;width:92px;overflow:hidden;text-align:right;font-size:11px;line-height:16px;color:#000;letter-spacing:-0.2px;">30,00</div>
<div class="t" style="left:265px;top:806px;width:105px;overflow:hidden;font-size:11px;line-height:16px;color:#000;font-weight:700;letter-spacing:1.35px;">NW/0030</div>
<div class="t" style="left:374px;top:806px;width:281px;overflow:hidden;font-size:11px;line-height:16px;color:#000;letter-spacing:-0.2px;">Zestaw komputerowy Phenom II + GTX 460</div>
<div class="t" style="left:1413px;top:806px;width:107px;overflow:hidden;text-align:right;font-size:11px;line-height:16px;color:#000;letter-spacing:-0.2px;">4 370,00</div>
<div class="t" style="left:1524px;top:806px;width:137px;overflow:hidden;text-align:right;font-size:11px;line-height:16px;color:#000;letter-spacing:-0.2px;">4 370,00</div>
<div class="t" style="left:1665px;top:806px;width:125px;overflow:hidden;text-align:right;font-size:11px;line-height:16px;color:#000;letter-spacing:-0.2px;">109,25</div>
<div class="t" style="left:1794px;top:806px;width:92px;overflow:hidden;text-align:right;font-size:11px;line-height:16px;color:#000;letter-spacing:-0.2px;">30,00</div>
<div class="t" style="left:265px;top:826px;width:105px;overflow:hidden;font-size:11px;line-height:16px;color:#000;font-weight:700;letter-spacing:1.35px;">NW/0031</div>
<div class="t" style="left:374px;top:826px;width:281px;overflow:hidden;font-size:11px;line-height:16px;color:#000;letter-spacing:-0.2px;">Renault Megane Coupe</div>
<div class="t" style="left:1413px;top:826px;width:107px;overflow:hidden;text-align:right;font-size:11px;line-height:16px;color:#000;letter-spacing:-0.2px;">56 200,00</div>
<div class="t" style="left:1524px;top:826px;width:137px;overflow:hidden;text-align:right;font-size:11px;line-height:16px;color:#000;letter-spacing:-0.2px;">56 200,00</div>
<div class="t" style="left:1665px;top:826px;width:125px;overflow:hidden;text-align:right;font-size:11px;line-height:16px;color:#000;letter-spacing:-0.2px;">0,00</div>
<div class="t" style="left:1794px;top:826px;width:92px;overflow:hidden;text-align:right;font-size:11px;line-height:16px;color:#000;letter-spacing:-0.2px;">20,00</div>
<div class="t" style="left:265px;top:846px;width:105px;overflow:hidden;font-size:11px;line-height:16px;color:#000;font-weight:700;letter-spacing:1.35px;">NW/0032</div>
<div class="t" style="left:374px;top:846px;width:281px;overflow:hidden;font-size:11px;line-height:16px;color:#000;letter-spacing:-0.2px;">Peugeot 308</div>
<div class="t" style="left:1413px;top:846px;width:107px;overflow:hidden;text-align:right;font-size:11px;line-height:16px;color:#000;letter-spacing:-0.2px;">39 000,00</div>
<div class="t" style="left:1524px;top:846px;width:137px;overflow:hidden;text-align:right;font-size:11px;line-height:16px;color:#000;letter-spacing:-0.2px;">39 000,00</div>
<div class="t" style="left:1665px;top:846px;width:125px;overflow:hidden;text-align:right;font-size:11px;line-height:16px;color:#000;letter-spacing:-0.2px;">0,00</div>
<div class="t" style="left:1794px;top:846px;width:92px;overflow:hidden;text-align:right;font-size:11px;line-height:16px;color:#000;letter-spacing:-0.2px;">20,00</div>
<div class="t" style="left:265px;top:866px;width:105px;overflow:hidden;font-size:11px;line-height:16px;color:#000;font-weight:700;letter-spacing:1.35px;">NW/0033</div>
<div class="t" style="left:374px;top:866px;width:281px;overflow:hidden;font-size:11px;line-height:16px;color:#000;letter-spacing:-0.2px;">Maszyna przetokowa</div>
<div class="t" style="left:1413px;top:866px;width:107px;overflow:hidden;text-align:right;font-size:11px;line-height:16px;color:#000;letter-spacing:-0.2px;">1 856 000,00</div>
<div class="t" style="left:1524px;top:866px;width:137px;overflow:hidden;text-align:right;font-size:11px;line-height:16px;color:#000;letter-spacing:-0.2px;">1 856 000,00</div>
<div class="t" style="left:1665px;top:866px;width:125px;overflow:hidden;text-align:right;font-size:11px;line-height:16px;color:#000;letter-spacing:-0.2px;">1 856 000,00</div>
<div class="t" style="left:1794px;top:866px;width:92px;overflow:hidden;text-align:right;font-size:11px;line-height:16px;color:#000;letter-spacing:-0.2px;">14,00</div>
<div style="left:243px;top:228px;width:11px;height:11px;border:1.5px solid #d8d8d8;border-radius:2px;background:#fff"></div>
<div style="left:243px;top:248px;width:11px;height:11px;border:1.5px solid #d8d8d8;border-radius:2px;background:#fff"></div>
<div style="left:243px;top:268px;width:11px;height:11px;border:1.5px solid #d8d8d8;border-radius:2px;background:#fff"></div>
<div style="left:243px;top:288px;width:11px;height:11px;border:1.5px solid #d8d8d8;border-radius:2px;background:#fff"></div>
<div style="left:243px;top:308px;width:11px;height:11px;border:1.5px solid #d8d8d8;border-radius:2px;background:#fff"></div>
<div style="left:243px;top:328px;width:11px;height:11px;border:1.5px solid #d8d8d8;border-radius:2px;background:#fff"></div>
<div style="left:243px;top:348px;width:11px;height:11px;border:1.5px solid #d8d8d8;border-radius:2px;background:#fff"></div>
<div style="left:243px;top:368px;width:11px;height:11px;border:1.5px solid #d8d8d8;border-radius:2px;background:#fff"></div>
<div style="left:243px;top:388px;width:11px;height:11px;border:1.5px solid #d8d8d8;border-radius:2px;background:#fff"></div>
<div style="left:243px;top:408px;width:11px;height:11px;border:1.5px solid #d8d8d8;border-radius:2px;background:#fff"></div>
<div style="left:243px;top:428px;width:11px;height:11px;border:1.5px solid #d8d8d8;border-radius:2px;background:#fff"></div>
<div style="left:243px;top:448px;width:11px;height:11px;border:1.5px solid #d8d8d8;border-radius:2px;background:#fff"></div>
<div style="left:243px;top:468px;width:11px;height:11px;border:1.5px solid #d8d8d8;border-radius:2px;background:#fff"></div>
<div style="left:243px;top:488px;width:11px;height:11px;border:1.5px solid #d8d8d8;border-radius:2px;background:#fff"></div>
<div style="left:243px;top:508px;width:11px;height:11px;border:1.5px solid #d8d8d8;border-radius:2px;background:#fff"></div>
<div style="left:243px;top:528px;width:11px;height:11px;border:1.5px solid #d8d8d8;border-radius:2px;background:#fff"></div>
<div style="left:243px;top:548px;width:11px;height:11px;border:1.5px solid #d8d8d8;border-radius:2px;background:#fff"></div>
<div style="left:243px;top:568px;width:11px;height:11px;border:1.5px solid #d8d8d8;border-radius:2px;background:#fff"></div>
<div style="left:243px;top:588px;width:11px;height:11px;border:1.5px solid #d8d8d8;border-radius:2px;background:#fff"></div>
<div style="left:243px;top:608px;width:11px;height:11px;border:1.5px solid #d8d8d8;border-radius:2px;background:#fff"></div>
<div style="left:243px;top:628px;width:11px;height:11px;border:1.5px solid #d8d8d8;border-radius:2px;background:#fff"></div>
<div style="left:243px;top:648px;width:11px;height:11px;border:1.5px solid #d8d8d8;border-radius:2px;background:#fff"></div>
<div style="left:243px;top:668px;width:11px;height:11px;border:1.5px solid #d8d8d8;border-radius:2px;background:#fff"></div>
<div style="left:243px;top:688px;width:11px;height:11px;border:1.5px solid #d8d8d8;border-radius:2px;background:#fff"></div>
<div style="left:243px;top:708px;width:11px;height:11px;border:1.5px solid #d8d8d8;border-radius:2px;background:#fff"></div>
<div style="left:243px;top:728px;width:11px;height:11px;border:1.5px solid #d8d8d8;border-radius:2px;background:#fff"></div>
<div style="left:243px;top:748px;width:11px;height:11px;border:1.5px solid #d8d8d8;border-radius:2px;background:#fff"></div>
<div style="left:243px;top:768px;width:11px;height:11px;border:1.5px solid #d8d8d8;border-radius:2px;background:#fff"></div>
<div style="left:243px;top:788px;width:11px;height:11px;border:1.5px solid #d8d8d8;border-radius:2px;background:#fff"></div>
<div style="left:243px;top:808px;width:11px;height:11px;border:1.5px solid #d8d8d8;border-radius:2px;background:#fff"></div>
<div style="left:243px;top:828px;width:11px;height:11px;border:1.5px solid #d8d8d8;border-radius:2px;background:#fff"></div>
<div style="left:243px;top:848px;width:11px;height:11px;border:1.5px solid #d8d8d8;border-radius:2px;background:#fff"></div>
<div style="left:243px;top:868px;width:11px;height:11px;border:1.5px solid #d8d8d8;border-radius:2px;background:#fff"></div>
<div style="left:237px;top:1069px;width:1666px;height:17px;background:#f0f0f0"></div>
<svg style="position:absolute;left:240px;top:1069px;" width="14" height="17" viewBox="0 0 14 17"><path d="M8 5 L4.8 8.5 L8 12" fill="none" stroke="#444" stroke-width="2.2"/></svg>
<div style="left:254px;top:1070px;width:17px;height:15px;background:#cdcdcd"></div>
<svg style="position:absolute;left:1887px;top:1069px;" width="14" height="17" viewBox="0 0 14 17"><path d="M5.5 5 L8.7 8.5 L5.5 12" fill="none" stroke="#444" stroke-width="2.2"/></svg>
<div class="t" style="left:17px;top:1086.0px;font-size:11px;line-height:16px;color:#8c8c8c;font-weight:400;letter-spacing:-0.1px">Ins</div>
<div style="left:12px;top:1101px;width:61px;height:21px;background:#e1e1e1;border:1px solid #adadad"></div>
<div class="t" style="left:-57.5px;width:200px;text-align:center;top:1103.5px;font-size:11px;line-height:16px;color:#000;font-weight:400;letter-spacing:-0.1px">Dodaj</div>
<div class="t" style="left:83px;top:1086.0px;font-size:11px;line-height:16px;color:#8c8c8c;font-weight:400;letter-spacing:-0.1px">F2</div>
<div style="left:78px;top:1101px;width:61px;height:21px;background:#e1e1e1;border:1px solid #adadad"></div>
<div class="t" style="left:8.5px;width:200px;text-align:center;top:1103.5px;font-size:11px;line-height:16px;color:#000;font-weight:400;letter-spacing:-0.1px">Popraw</div>
<div class="t" style="left:149px;top:1086.0px;font-size:11px;line-height:16px;color:#8c8c8c;font-weight:400;letter-spacing:-0.1px">Del</div>
<div style="left:144px;top:1101px;width:61px;height:21px;background:#e1e1e1;border:1px solid #adadad"></div>
<div class="t" style="left:74.5px;width:200px;text-align:center;top:1103.5px;font-size:11px;line-height:16px;color:#000;font-weight:400;letter-spacing:-0.1px">Usuń</div>
<div class="t" style="left:215px;top:1086.0px;font-size:11px;line-height:16px;color:#8c8c8c;font-weight:400;letter-spacing:-0.1px">Shft+F2</div>
<div style="left:210px;top:1101px;width:61px;height:21px;background:#e1e1e1;border:1px solid #adadad"></div>
<div class="t" style="left:140.5px;width:200px;text-align:center;top:1103.5px;font-size:11px;line-height:16px;color:#000;font-weight:400;letter-spacing:-0.1px">Pokaż</div>
<div class="t" style="left:281px;top:1086.0px;font-size:11px;line-height:16px;color:#8c8c8c;font-weight:400;letter-spacing:-0.1px">Ctrl+O</div>
<div style="left:276px;top:1101px;width:79px;height:21px;background:#e1e1e1;border:1px solid #adadad"></div>
<div class="t" style="left:283px;top:1103.5px;font-size:11px;line-height:16px;color:#000;font-weight:400;letter-spacing:-0.1px">Operacje</div>
<svg style="position:absolute;left:339px;top:1110px;" width="8" height="6" viewBox="0 0 8 6"><polygon points="0,0 7,0 3.5,4" fill="#222"/></svg>
<div class="t" style="left:365px;top:1086.0px;font-size:11px;line-height:16px;color:#8c8c8c;font-weight:400;letter-spacing:-0.1px">Ctrl+D</div>
<div style="left:360px;top:1101px;width:61px;height:21px;background:#e1e1e1;border:1px solid #adadad"></div>
<div class="t" style="left:290.5px;width:200px;text-align:center;top:1103.5px;font-size:11px;line-height:16px;color:#000;font-weight:400;letter-spacing:-0.1px">Wydruki</div>
<div class="t" style="left:431px;top:1086.0px;font-size:11px;line-height:16px;color:#8c8c8c;font-weight:400;letter-spacing:-0.1px">Ctrl+E</div>
<div style="left:426px;top:1101px;width:76px;height:21px;background:#e1e1e1;border:1px solid #adadad"></div>
<div class="t" style="left:364.0px;width:200px;text-align:center;top:1103.5px;font-size:11px;line-height:16px;color:#000;font-weight:400;letter-spacing:-0.1px">e-Dokumenty</div>
<div class="t" style="left:512px;top:1086.0px;font-size:11px;line-height:16px;color:#8c8c8c;font-weight:400;letter-spacing:-0.1px">Enter</div>
<div style="left:507px;top:1101px;width:61px;height:21px;background:#cccccc;border:1px solid #bfbfbf"></div>
<div class="t" style="left:437.5px;width:200px;text-align:center;top:1103.5px;font-size:11px;line-height:16px;color:#8a8a8a;font-weight:400;letter-spacing:-0.1px">Wybierz</div>
<div class="t" style="left:1847px;top:1086.0px;font-size:11px;line-height:16px;color:#8c8c8c;font-weight:400;letter-spacing:-0.1px">Esc</div>
<div style="left:1842px;top:1101px;width:61px;height:21px;background:#e1e1e1;border:1px solid #adadad"></div>
<div class="t" style="left:1772.5px;width:200px;text-align:center;top:1103.5px;font-size:11px;line-height:16px;color:#000;font-weight:400;letter-spacing:-0.1px">Zamknij</div>
<div style="left:1px;top:1125px;width:1916px;height:8px;background:#d3e2f0"></div>
<div style="left:1910px;top:170px;width:7px;height:955px;background:#d3e2f0"></div>
<div style="left:1px;top:170px;width:7px;height:955px;background:#d3e2f0"></div>
<div style="left:0px;top:1134px;width:1920px;height:5px;background:#fff"></div>
<div style="left:0px;top:1139px;width:1920px;height:1px;background:#a0a0a0"></div>
<div style="left:0px;top:1140px;width:1920px;height:20px;background:#f0f0f0"></div>
<div style="left:8px;top:1142px;width:1px;height:15px;background:#a0a0a0"></div>
<div style="left:18px;top:1143px;width:188px;height:18px;border-top:1px solid #a0a0a0;border-left:1px solid #a0a0a0;border-right:1px solid #fff"></div>
<div class="t" style="left:22px;top:1142.5px;font-size:11px;line-height:16px;color:#000;font-weight:400;letter-spacing:-0.1px">Użytkownik: admin/admin</div>
<div style="left:214px;top:1143px;width:195px;height:18px;border-top:1px solid #a0a0a0;border-left:1px solid #a0a0a0;border-right:1px solid #fff"></div>
<div class="t" style="left:218px;top:1142.5px;font-size:11px;line-height:16px;color:#000;font-weight:400;letter-spacing:-0.1px">Firma: Solidna Firma Sp. z o.o.</div>
<div style="left:417px;top:1143px;width:128px;height:18px;border-top:1px solid #a0a0a0;border-left:1px solid #a0a0a0;border-right:1px solid #fff"></div>
<div class="t" style="left:421px;top:1142.5px;font-size:11px;line-height:16px;color:#000;font-weight:400;letter-spacing:-0.1px">Okres obrotowy: 12/2016</div>
<div style="left:553px;top:1143px;width:135px;height:18px;border-top:1px solid #a0a0a0;border-left:1px solid #a0a0a0;border-right:1px solid #fff"></div>
<div class="t" style="left:557px;top:1142.5px;font-size:11px;line-height:16px;color:#000;font-weight:400;letter-spacing:-0.1px">Data operacji: 31/12/2016</div>
<div style="left:696px;top:1143px;width:335px;height:18px;border-top:1px solid #a0a0a0;border-left:1px solid #a0a0a0;border-right:1px solid #fff"></div>
<div class="t" style="left:700px;top:1142.5px;font-size:11px;line-height:16px;color:#000;font-weight:400;letter-spacing:-0.1px">Data aktualizacji planu: 31/12/2016;15:53; --PLAN AKTUALNY--</div>
<div style="left:557px;top:386px;width:808px;height:505px;background:linear-gradient(#9cb5d6 0px,#b3c9e4 25px,#bcd0ea 32px,#b9cee9 100%);border:1px solid #1c1c1c;border-radius:6px 6px 0 0"></div>
<div style="left:558px;top:882px;width:806px;height:8px;background:linear-gradient(#b0c6e6,#9fd8ef)"></div>
<div style="left:1356px;top:417px;width:7px;height:466px;background:linear-gradient(90deg,#b4cae8,#a8d6f0)"></div>
<svg style="position:absolute;left:566px;top:397px;" width="17" height="17" viewBox="0 0 17 17"><polygon points="4.25,1.02 12.75,1.02 17,8.5 12.75,15.979999999999999 4.25,15.979999999999999 0,8.5" fill="#e0161e"/><text x="8.5" y="12.24" font-family="Liberation Sans" font-weight="700" font-size="10.2" fill="#fff" text-anchor="middle">B</text></svg>
<div class="t" style="left:587px;top:398.0px;font-size:12px;line-height:17px;color:#1e1e1e;font-weight:400;letter-spacing:-0.1px">Kartoteka składnika majątku trwałego</div>
<div style="left:1255px;top:396px;width:31px;height:18px;background:linear-gradient(#d0def0 0%,#c4d5eb 45%,#aec3de 50%,#bfd2ea 100%);border:1px solid #6f849f;border-radius:3px"></div>
<div style="left:1289px;top:396px;width:31px;height:18px;background:linear-gradient(#c8d8ec 0%,#bccfe6 45%,#a9bfdb 50%,#b8cce6 100%);border:1px solid #8a9cb5;border-radius:3px"></div>
<div style="left:1323px;top:396px;width:32px;height:18px;background:linear-gradient(#eba093 0%,#d96b55 45%,#c8452c 55%,#e38670 100%);border:1px solid #2a1512;border-radius:3px"></div>
<svg style="position:absolute;left:1255px;top:396px;" width="100" height="18" viewBox="0 0 100 18"><rect x="10.5" y="9.5" width="10" height="4" rx="1" fill="#eef2f7" stroke="#3b4a60"/><rect x="44.5" y="4.5" width="10" height="8" rx="1" fill="none" stroke="#3b4a60"/><rect x="47.5" y="7.5" width="4" height="2" fill="none" stroke="#3b4a60"/><path d="M81 6.5 L88 12.5 M88 6.5 L81 12.5" stroke="#6a2a1e" stroke-width="4.2" stroke-linecap="square"/><path d="M81 6.5 L88 12.5 M88 6.5 L81 12.5" stroke="#fff" stroke-width="2.4" stroke-linecap="square"/></svg>
<div style="left:564px;top:417px;width:793px;height:466px;background:#f0f0f0"></div>
<div style="left:564px;top:417px;width:793px;height:3px;background:#e6ebf0"></div>
<div style="left:564px;top:420px;width:793px;height:24px;background:#fff"></div>
<svg style="position:absolute;left:570px;top:425px;" width="4" height="16" viewBox="0 0 4 16"><circle cx="2" cy="2" r="1.3" fill="#a3262a"/><circle cx="2" cy="8" r="1.3" fill="#a3262a"/><circle cx="2" cy="14" r="1.3" fill="#a3262a"/></svg>
<div class="t" style="left:583px;top:422.85px;font-size:14.3px;line-height:19.3px;color:#555;font-weight:400;-webkit-text-stroke:0.3px #555;letter-spacing:0.45px">Dane składnika majątku</div>
<div style="left:570px;top:467px;width:780px;height:371px;background:#fff;border:1px solid #d9d9d9"></div>
<div style="left:571px;top:446px;width:71px;height:22px;background:#fff;border:1px solid #d9d9d9;border-bottom:none"></div>
<div class="t" style="left:575px;top:450.0px;font-size:11px;line-height:16px;color:#000;font-weight:400;letter-spacing:-0.2px">Podstawowe</div>
<div style="left:642px;top:447px;width:83px;height:21px;background:#f0f0f0;border:1px solid #d9d9d9"></div>
<div class="t" style="left:646px;top:450.0px;font-size:11px;line-height:16px;color:#000;font-weight:400;letter-spacing:-0.2px">Amortyzacja bil.</div>
<div style="left:724px;top:447px;width:92px;height:21px;background:#f0f0f0;border:1px solid #d9d9d9"></div>
<div class="t" style="left:728px;top:450.0px;font-size:11px;line-height:16px;color:#000;font-weight:400;letter-spacing:-0.2px">Amortyzacja pod.</div>
<div style="left:815px;top:447px;width:71px;height:21px;background:#f0f0f0;border:1px solid #d9d9d9"></div>
<div class="t" style="left:819px;top:450.0px;font-size:11px;line-height:16px;color:#000;font-weight:400;letter-spacing:-0.2px">Księgowanie</div>
<div style="left:885px;top:447px;width:87px;height:21px;background:#f0f0f0;border:1px solid #d9d9d9"></div>
<div class="t" style="left:889px;top:450.0px;font-size:11px;line-height:16px;color:#000;font-weight:400;letter-spacing:-0.2px">Plan amortyzacji</div>
<div style="left:971px;top:447px;width:69px;height:21px;background:#f0f0f0;border:1px solid #d9d9d9"></div>
<div class="t" style="left:975px;top:450.0px;font-size:11px;line-height:16px;color:#000;font-weight:400;letter-spacing:-0.2px">Amortyzacja</div>
<div style="left:1039px;top:447px;width:54px;height:21px;background:#f0f0f0;border:1px solid #d9d9d9"></div>
<div class="t" style="left:1043px;top:450.0px;font-size:11px;line-height:16px;color:#000;font-weight:400;letter-spacing:-0.2px">Operacje</div>
<div style="left:1092px;top:447px;width:64px;height:21px;background:#f0f0f0;border:1px solid #d9d9d9"></div>
<div class="t" style="left:1096px;top:450.0px;font-size:11px;line-height:16px;color:#000;font-weight:400;letter-spacing:-0.2px">Dokumenty</div>
<div style="left:1155px;top:447px;width:67px;height:21px;background:#f0f0f0;border:1px solid #d9d9d9"></div>
<div class="t" style="left:1159px;top:450.0px;font-size:11px;line-height:16px;color:#000;font-weight:400;letter-spacing:-0.2px">Dodatkowe</div>
<div style="left:1221px;top:447px;width:48px;height:21px;background:#f0f0f0;border:1px solid #d9d9d9"></div>
<div class="t" style="left:1225px;top:450.0px;font-size:11px;line-height:16px;color:#000;font-weight:400;letter-spacing:-0.2px">Historia</div>
<div class="t" style="left:592px;top:476.0px;font-size:11px;line-height:16px;color:#000;font-weight:400;letter-spacing:-0.2px;">L.p.</div>
<div style="left:699px;top:476px;width:65px;height:20px;background:#fff;border:1px solid #abadb3"></div>
<div class="t" style="left:461.5px;width:300px;text-align:right;top:478.0px;font-size:11px;line-height:16px;color:#777;font-weight:400;">9</div>
<div class="t" style="left:775px;top:476.0px;font-size:11px;line-height:16px;color:#000;font-weight:400;letter-spacing:-0.2px;">Nr inwentarzowy</div>
<div class="t" style="left:856px;top:476.5px;font-size:10px;line-height:15px;color:#c85050;font-weight:400;">»</div>
<div style="left:867px;top:476px;width:111px;height:20px;background:#ffffc6;border:1px solid #abadb3"></div>
<div style="left:870px;top:479px;width:56px;height:13px;background:#1f6dbd"></div>
<div class="t" style="left:870px;top:478.0px;font-size:11px;line-height:16px;color:#fff;font-weight:700;letter-spacing:1.4px">NW/0007</div>
<div class="t" style="left:992px;top:476.0px;font-size:11px;line-height:16px;color:#000;font-weight:400;letter-spacing:-0.2px;">Status:</div>
<div style="left:1036px;top:476px;width:120px;height:20px;background:#f0f0f0;border:1px solid #b4b4b4"></div>
<div class="t" style="left:1040px;top:478.0px;font-size:11px;line-height:16px;color:#777;font-weight:400;letter-spacing:-0.2px;">Amortyzowany</div>
<div class="t" style="left:1171px;top:476.0px;font-size:11px;line-height:16px;color:#000;font-weight:400;letter-spacing:-0.2px;">Nr seryjny:</div>
<div style="left:1225px;top:476px;width:90px;height:20px;background:#fff;border:1px solid #abadb3"></div>
<div class="t" style="left:592px;top:500.3px;font-size:11px;line-height:16px;color:#000;font-weight:400;letter-spacing:-0.2px;">Nazwa:</div>
<div class="t" style="left:691px;top:503.5px;font-size:10px;line-height:15px;color:#d03030;font-weight:400;">*</div>
<div style="left:699px;top:502px;width:616px;height:20px;background:#fff;border:1px solid #abadb3"></div>
<div class="t" style="left:703px;top:504.0px;font-size:11px;line-height:16px;color:#000;font-weight:700;letter-spacing:0.4px">Budynek Magazynowy</div>
<svg style="position:absolute;left:1321px;top:504px;" width="17" height="15" viewBox="0 0 17 15"><rect x="0.5" y="2.5" width="15" height="11" fill="#fff" stroke="#3e4c5e"/><rect x="0" y="0" width="7.5" height="3.5" fill="#2f63a0"/><rect x="0" y="2.5" width="16" height="2" fill="#2f63a0"/></svg>
<div style="left:579px;top:538px;width:768px;height:159px;border:1px solid #dcdcdc"></div>
<div class="t" style="left:594px;top:556.0px;font-size:11px;line-height:16px;color:#000;font-weight:400;letter-spacing:-0.2px;">Klasyfikacja:</div>
<div style="left:699px;top:552px;width:615px;height:20px;background:#fafafa;border:1px solid #b4b4b4"></div>
<div class="t" style="left:703px;top:553.5px;font-size:11px;line-height:16px;color:#6d6d6d;font-weight:400;letter-spacing:-0.2px;">101 - Budynki przemysłowe</div>
<div class="t" style="left:594px;top:582.0px;font-size:11px;line-height:16px;color:#000;font-weight:400;letter-spacing:-0.2px;">Miejsce użytkowania:</div>
<div style="left:699px;top:578px;width:615px;height:20px;background:#fafafa;border:1px solid #b4b4b4"></div>
<div class="t" style="left:703px;top:579.5px;font-size:11px;line-height:16px;color:#6d6d6d;font-weight:400;letter-spacing:-0.2px;">FIRMA - FIRMA</div>
<div class="t" style="left:594px;top:608.0px;font-size:11px;line-height:16px;color:#000;font-weight:400;letter-spacing:-0.2px;">Stan. kosztowe:</div>
<div style="left:699px;top:604px;width:615px;height:20px;background:#fafafa;border:1px solid #b4b4b4"></div>
<div class="t" style="left:703px;top:605.5px;font-size:11px;line-height:16px;color:#6d6d6d;font-weight:400;letter-spacing:-0.2px;">Dział Magazynowy -  (100,00%; 50 290,00)</div>
<div class="t" style="left:594px;top:634.0px;font-size:11px;line-height:16px;color:#000;font-weight:400;letter-spacing:-0.2px;">Sposób nabycia:</div>
<div style="left:699px;top:630px;width:271px;height:20px;background:#fff;border:1px solid #b4b4b4"></div>
<div class="t" style="left:594px;top:660.0px;font-size:11px;line-height:16px;color:#000;font-weight:400;letter-spacing:-0.2px;">Os. odpowiedzialna:</div>
<div style="left:699px;top:656px;width:271px;height:20px;background:#fff;border:1px solid #b4b4b4"></div>
<svg style="position:absolute;left:1318px;top:555px;" width="17" height="15" viewBox="0 0 17 15"><path d="M0.8 14 V3 H15.5 V14" fill="none" stroke="#8f8f8f" stroke-width="1.3"/><rect x="0" y="1" width="7" height="3" fill="#9a9a9a"/><rect x="0" y="3" width="16" height="1.5" fill="#9a9a9a"/></svg>
<svg style="position:absolute;left:1318px;top:581px;" width="17" height="15" viewBox="0 0 17 15"><path d="M0.8 14 V3 H15.5 V14" fill="none" stroke="#8f8f8f" stroke-width="1.3"/><rect x="0" y="1" width="7" height="3" fill="#9a9a9a"/><rect x="0" y="3" width="16" height="1.5" fill="#9a9a9a"/></svg>
<svg style="position:absolute;left:1321px;top:607px;" width="17" height="15" viewBox="0 0 17 15"><rect x="0.5" y="2.5" width="15" height="11" fill="#fff" stroke="#3e4c5e"/><rect x="0" y="0" width="7.5" height="3.5" fill="#2f63a0"/><rect x="0" y="2.5" width="16" height="2" fill="#2f63a0"/></svg>
<svg style="position:absolute;left:979px;top:633px;" width="17" height="15" viewBox="0 0 17 15"><rect x="0.5" y="2.5" width="15" height="11" fill="#fff" stroke="#3e4c5e"/><rect x="0" y="0" width="7.5" height="3.5" fill="#2f63a0"/><rect x="0" y="2.5" width="16" height="2" fill="#2f63a0"/></svg>
<svg style="position:absolute;left:977px;top:659px;" width="17" height="15" viewBox="0 0 17 15"><path d="M0.8 14 V3 H15.5 V14" fill="none" stroke="#8f8f8f" stroke-width="1.3"/><rect x="0" y="1" width="7" height="3" fill="#9a9a9a"/><rect x="0" y="3" width="16" height="1.5" fill="#9a9a9a"/></svg>
<div style="left:582px;top:709px;width:177px;height:117px;border:1px solid #dcdcdc"></div>
<div style="left:588px;top:703px;width:130px;height:12px;background:#fff"></div>
<div class="t" style="left:591px;top:702.0px;font-size:11px;line-height:16px;color:#000;font-weight:400;letter-spacing:-0.2px;">Rodzaj składnika majątku:</div>
<svg style="position:absolute;left:587px;top:723px;" width="14" height="14" viewBox="0 0 14 14"><circle cx="7" cy="7" r="6" fill="#fbfbfb" stroke="#d0d0d0"/><circle cx="7" cy="7" r="3.2" fill="#b8b8b8"/></svg>
<div class="t" style="left:604px;top:722.0px;font-size:11px;line-height:16px;color:#767676;font-weight:400;letter-spacing:-0.2px;">Środek trwały</div>
<svg style="position:absolute;left:587px;top:749px;" width="14" height="14" viewBox="0 0 14 14"><circle cx="7" cy="7" r="6" fill="#fbfbfb" stroke="#d0d0d0"/></svg>
<div class="t" style="left:604px;top:748.0px;font-size:11px;line-height:16px;color:#767676;font-weight:400;letter-spacing:-0.2px;">Wartość niematerialna i prawna</div>
<svg style="position:absolute;left:587px;top:775px;" width="14" height="14" viewBox="0 0 14 14"><circle cx="7" cy="7" r="6" fill="#fbfbfb" stroke="#d0d0d0"/></svg>
<div class="t" style="left:604px;top:774.0px;font-size:11px;line-height:16px;color:#767676;font-weight:400;letter-spacing:-0.2px;">Środek trwały w budowie</div>
<svg style="position:absolute;left:587px;top:801px;" width="14" height="14" viewBox="0 0 14 14"><circle cx="7" cy="7" r="6" fill="#fbfbfb" stroke="#d0d0d0"/></svg>
<div class="t" style="left:604px;top:800.0px;font-size:11px;line-height:16px;color:#767676;font-weight:400;letter-spacing:-0.2px;">Wieczyście użytkowany</div>
<div style="left:762px;top:709px;width:489px;height:117px;border:1px solid #dcdcdc"></div>
<div class="t" style="left:768px;top:720.0px;font-size:11px;line-height:16px;color:#000;font-weight:400;letter-spacing:-0.2px;">Data zakupu:</div>
<div class="t" style="left:768px;top:741.0px;font-size:11px;line-height:16px;color:#000;font-weight:400;letter-spacing:-0.2px;">Data wprowadzenia do ewidencji:</div>
<div class="t" style="left:768px;top:767.0px;font-size:11px;line-height:16px;color:#000;font-weight:400;letter-spacing:-0.2px;">Okres pierwszej amortyzacji:</div>
<div class="t" style="left:768px;top:793.0px;font-size:11px;line-height:16px;color:#000;font-weight:400;letter-spacing:-0.2px;">Okres poprzedniej amortyzacji:</div>
<div class="t" style="left:943px;top:744.0px;font-size:10px;line-height:15px;color:#d03030;font-weight:400;">*</div>
<div style="left:951px;top:716px;width:78px;height:20px;background:#fff;border:1px solid #b4b4b4"></div>
<div class="t" style="left:960px;top:718.0px;font-size:11px;line-height:16px;color:#6d6d6d;font-weight:400;letter-spacing:-0.2px;">01-01-2009</div>
<div style="left:1015px;top:717px;width:13px;height:18px;background:#f4f4f4;border-left:1px solid #e0e0e0"></div>
<svg style="position:absolute;left:1015px;top:717px;" width="13" height="18" viewBox="0 0 13 18"><polygon points="3.5,7 9.5,7 6.5,4" fill="#555"/><polygon points="3.5,10 9.5,10 6.5,13" fill="#555"/><line x1="1" y1="9.0" x2="12" y2="9.0" stroke="#e0e0e0"/></svg>
<svg style="position:absolute;left:1032px;top:712px;" width="22" height="21" viewBox="0 0 22 21"><rect x="1.6" y="4.5" width="18.8" height="15" rx="1" fill="#fff" stroke="#8a8a8a" stroke-width="1.3"/><rect x="1" y="1.2" width="20" height="4.8" fill="#8f8f8f"/><rect x="4.2" y="1.2" width="3.6" height="2.3" fill="#fff"/><rect x="14.2" y="1.2" width="3.6" height="2.3" fill="#fff"/><rect x="5.4" y="0" width="1.4" height="3.5" fill="#8f8f8f"/><rect x="15.4" y="0" width="1.4" height="3.5" fill="#8f8f8f"/><rect x="8.6" y="11.4" width="5" height="3.2" fill="none" stroke="#8a8a8a" stroke-width="1.1"/></svg>
<div class="t" style="left:1060px;top:715.0px;font-size:11px;line-height:16px;color:#000;font-weight:400;letter-spacing:-0.2px;">Brak dokumentu zakupu</div>
<div style="left:951px;top:742px;width:78px;height:20px;background:#fff;border:1px solid #b4b4b4"></div>
<div class="t" style="left:960px;top:743.5px;font-size:11px;line-height:16px;color:#6d6d6d;font-weight:400;letter-spacing:-0.2px;">01-01-2009</div>
<div style="left:1015px;top:743px;width:13px;height:18px;background:#f4f4f4;border-left:1px solid #e0e0e0"></div>
<svg style="position:absolute;left:1015px;top:743px;" width="13" height="18" viewBox="0 0 13 18"><polygon points="3.5,7 9.5,7 6.5,4" fill="#555"/><polygon points="3.5,10 9.5,10 6.5,13" fill="#555"/><line x1="1" y1="9.0" x2="12" y2="9.0" stroke="#e0e0e0"/></svg>
<svg style="position:absolute;left:1032px;top:738px;" width="22" height="21" viewBox="0 0 22 21"><rect x="1.6" y="4.5" width="18.8" height="15" rx="1" fill="#fff" stroke="#8a8a8a" stroke-width="1.3"/><rect x="1" y="1.2" width="20" height="4.8" fill="#8f8f8f"/><rect x="4.2" y="1.2" width="3.6" height="2.3" fill="#fff"/><rect x="14.2" y="1.2" width="3.6" height="2.3" fill="#fff"/><rect x="5.4" y="0" width="1.4" height="3.5" fill="#8f8f8f"/><rect x="15.4" y="0" width="1.4" height="3.5" fill="#8f8f8f"/><rect x="8.6" y="11.4" width="5" height="3.2" fill="none" stroke="#8a8a8a" stroke-width="1.1"/></svg>
<div style="left:951px;top:768px;width:36px;height:20px;background:#fff;border:1px solid #b4b4b4"></div>
<div class="t" style="left:671px;width:300px;text-align:right;top:769.5px;font-size:11px;line-height:16px;color:#6d6d6d;font-weight:400;">2</div>
<div style="left:972px;top:769px;width:13px;height:18px;background:#f4f4f4;border-left:1px solid #e0e0e0"></div>
<svg style="position:absolute;left:972px;top:769px;" width="13" height="18" viewBox="0 0 13 18"><polygon points="3.5,7 9.5,7 6.5,4" fill="#555"/><polygon points="3.5,10 9.5,10 6.5,13" fill="#555"/><line x1="1" y1="9.0" x2="12" y2="9.0" stroke="#e0e0e0"/></svg>
<div style="left:1002px;top:768px;width:50px;height:20px;background:#fff;border:1px solid #b4b4b4"></div>
<div class="t" style="left:737px;width:300px;text-align:right;top:769.5px;font-size:11px;line-height:16px;color:#6d6d6d;font-weight:400;letter-spacing:-0.2px">2009</div>
<div style="left:1037px;top:769px;width:13px;height:18px;background:#f4f4f4;border-left:1px solid #e0e0e0"></div>
<svg style="position:absolute;left:1037px;top:769px;" width="13" height="18" viewBox="0 0 13 18"><polygon points="3.5,7 9.5,7 6.5,4" fill="#555"/><polygon points="3.5,10 9.5,10 6.5,13" fill="#555"/><line x1="1" y1="9.0" x2="12" y2="9.0" stroke="#e0e0e0"/></svg>
<div style="left:951px;top:794px;width:47px;height:20px;background:#fff;border:1px solid #b4b4b4"></div>
<div class="t" style="left:695px;width:300px;text-align:right;top:795.5px;font-size:11px;line-height:16px;color:#6d6d6d;font-weight:400;letter-spacing:-0.2px">1/2016</div>
<div style="left:1257px;top:709px;width:90px;height:117px;border:1px solid #dcdcdc"></div>
<div style="left:1263px;top:703px;width:82px;height:12px;background:#fff"></div>
<div class="t" style="left:1266px;top:702.0px;font-size:11px;line-height:16px;color:#000;font-weight:400;letter-spacing:-0.2px;">Nowy/Używany</div>
<svg style="position:absolute;left:1268px;top:736px;" width="14" height="14" viewBox="0 0 14 14"><circle cx="7" cy="7" r="6" fill="#fbfbfb" stroke="#d0d0d0"/><circle cx="7" cy="7" r="3.2" fill="#b8b8b8"/></svg>
<div class="t" style="left:1285px;top:735.0px;font-size:11px;line-height:16px;color:#767676;font-weight:400;letter-spacing:-0.2px;">Nowy</div>
<svg style="position:absolute;left:1268px;top:783px;" width="14" height="14" viewBox="0 0 14 14"><circle cx="7" cy="7" r="6" fill="#fbfbfb" stroke="#d0d0d0"/></svg>
<div class="t" style="left:1285px;top:782.0px;font-size:11px;line-height:16px;color:#767676;font-weight:400;letter-spacing:-0.2px;">Używany</div>
<div class="t" style="left:575px;top:842.5px;font-size:11px;line-height:16px;color:#8c8c8c;font-weight:400;letter-spacing:-0.1px">Ctrl+P</div>
<div style="left:571px;top:857px;width:87px;height:21px;background:#e1e1e1;border:1px solid #adadad"></div>
<div class="t" style="left:514.5px;width:200px;text-align:center;top:860.0px;font-size:11px;line-height:16px;color:#000;font-weight:400;letter-spacing:-0.1px">Pola dodatkowe</div>
<div class="t" style="left:668px;top:842.5px;font-size:11px;line-height:16px;color:#8c8c8c;font-weight:400;letter-spacing:-0.1px">Ctrl+H</div>
<div style="left:664px;top:857px;width:87px;height:21px;background:#e1e1e1;border:1px solid #adadad"></div>
<div class="t" style="left:607.5px;width:200px;text-align:center;top:860.0px;font-size:11px;line-height:16px;color:#000;font-weight:400;letter-spacing:-0.1px">Historia zmian</div>
<div class="t" style="left:761px;top:842.5px;font-size:11px;line-height:16px;color:#8c8c8c;font-weight:400;letter-spacing:-0.1px">Ctrl+K</div>
<div style="left:757px;top:857px;width:87px;height:21px;background:#e1e1e1;border:1px solid #adadad"></div>
<div class="t" style="left:700.5px;width:200px;text-align:center;top:860.0px;font-size:11px;line-height:16px;color:#000;font-weight:400;letter-spacing:-0.1px">Historia KŚT</div>
<div class="t" style="left:1215px;top:842.5px;font-size:11px;line-height:16px;color:#8c8c8c;font-weight:400;letter-spacing:-0.1px">F10</div>
<div style="left:1211px;top:857px;width:67px;height:21px;background:#e1e1e1;border:1px solid #adadad"></div>
<div class="t" style="left:1144.5px;width:200px;text-align:center;top:860.0px;font-size:11px;line-height:16px;color:#000;font-weight:400;letter-spacing:-0.1px">Zatwierdź</div>
<div class="t" style="left:1289px;top:842.5px;font-size:11px;line-height:16px;color:#8c8c8c;font-weight:400;letter-spacing:-0.1px">Esc</div>
<div style="left:1285px;top:857px;width:67px;height:21px;background:#e1e1e1;border:1px solid #adadad"></div>
<div class="t" style="left:1218.5px;width:200px;text-align:center;top:860.0px;font-size:11px;line-height:16px;color:#000;font-weight:400;letter-spacing:-0.1px">Anuluj</div>
</body></html>
